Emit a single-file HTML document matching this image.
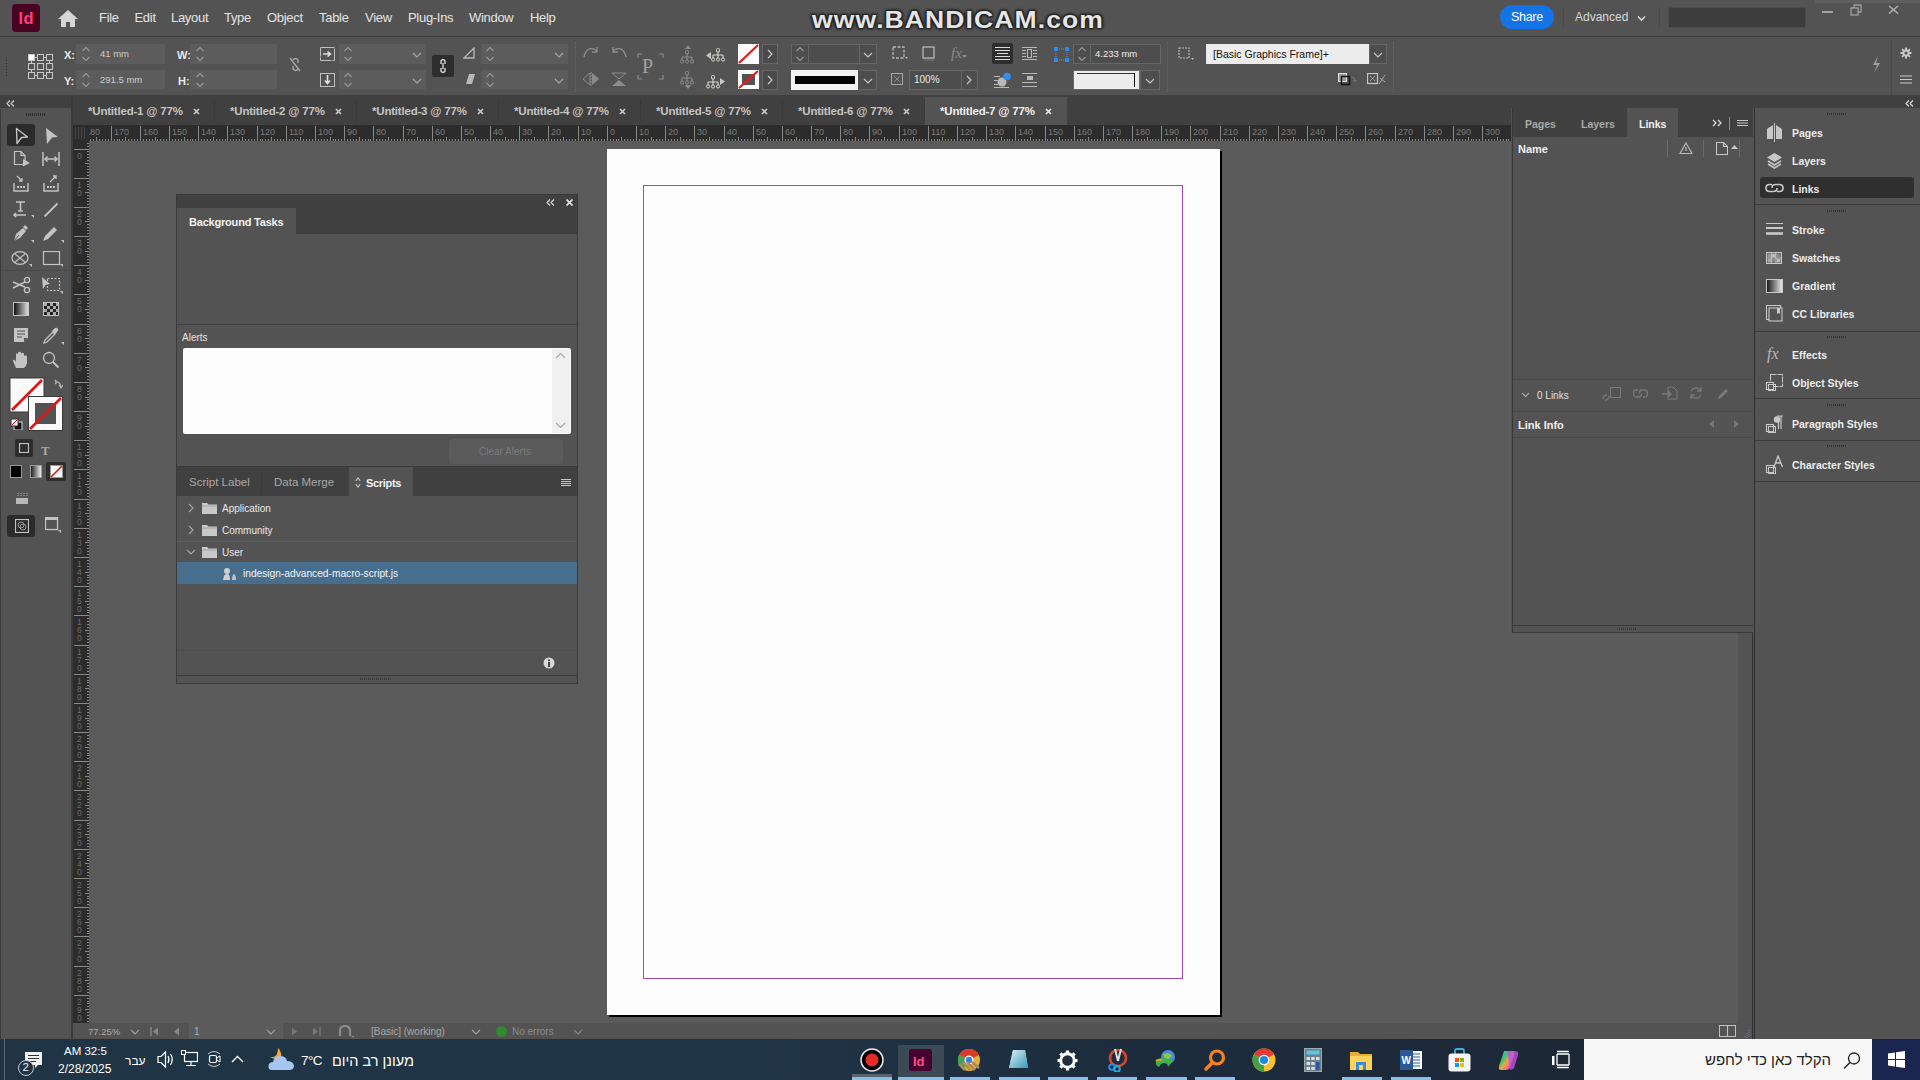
<!DOCTYPE html>
<html><head><meta charset="utf-8"><style>
html,body{margin:0;padding:0;}
body{width:1920px;height:1080px;overflow:hidden;position:relative;background:#535353;font-family:"Liberation Sans", sans-serif;}
body>div,body>svg{position:absolute;}
.t{white-space:nowrap;}
.bc{font-family:"Liberation Sans",sans-serif;font-weight:bold;font-size:24px;line-height:28px;color:#e6e6e6;letter-spacing:1px;transform:scaleX(1.104);transform-origin:0 0;text-shadow:0 0 3px #222,1px 1px 2px #222,-1px -1px 2px #222,1px -1px 2px #222,-1px 1px 2px #222;}
</style></head><body>
<div style="left:0px;top:0px;width:1920px;height:36px;background:#535353"></div><div style="left:0px;top:36px;width:1920px;height:1px;background:#3c3c3c"></div><div style="left:12px;top:4px;width:28px;height:28px;background:#49021f;border-radius:4px"></div><div class="t" style="left:18.5px;top:9.53px;font-size:16.5px;line-height:16.5px;color:#ff3f80;font-weight:bold;letter-spacing:0.3px">Id</div><svg style="left:57px;top:9px;" width="22" height="20" viewBox="0 0 22 20"><path d="M11 1 L21 10 L18 10 L18 18 L13 18 L13 13 L9 13 L9 18 L4 18 L4 10 L1 10 Z" fill="#d6d6d6"/></svg><div class="t" style="left:99px;top:11.00px;font-size:13px;line-height:13px;color:#e4e4e4;font-weight:normal;letter-spacing:-0.3px">File</div><div class="t" style="left:134.5px;top:11.00px;font-size:13px;line-height:13px;color:#e4e4e4;font-weight:normal;letter-spacing:-0.3px">Edit</div><div class="t" style="left:171px;top:11.00px;font-size:13px;line-height:13px;color:#e4e4e4;font-weight:normal;letter-spacing:-0.3px">Layout</div><div class="t" style="left:224px;top:11.00px;font-size:13px;line-height:13px;color:#e4e4e4;font-weight:normal;letter-spacing:-0.3px">Type</div><div class="t" style="left:267px;top:11.00px;font-size:13px;line-height:13px;color:#e4e4e4;font-weight:normal;letter-spacing:-0.3px">Object</div><div class="t" style="left:319px;top:11.00px;font-size:13px;line-height:13px;color:#e4e4e4;font-weight:normal;letter-spacing:-0.3px">Table</div><div class="t" style="left:365px;top:11.00px;font-size:13px;line-height:13px;color:#e4e4e4;font-weight:normal;letter-spacing:-0.3px">View</div><div class="t" style="left:408px;top:11.00px;font-size:13px;line-height:13px;color:#e4e4e4;font-weight:normal;letter-spacing:-0.3px">Plug-Ins</div><div class="t" style="left:469px;top:11.00px;font-size:13px;line-height:13px;color:#e4e4e4;font-weight:normal;letter-spacing:-0.3px">Window</div><div class="t" style="left:530px;top:11.00px;font-size:13px;line-height:13px;color:#e4e4e4;font-weight:normal;letter-spacing:-0.3px">Help</div><div class="t bc" style="left:812px;top:5.5px;">www.BANDICAM.com</div><div style="left:1500px;top:5px;width:54px;height:24px;background:#1473e6;border-radius:12px"></div><div class="t" style="left:1511px;top:10.92px;font-size:12.5px;line-height:12.5px;color:#ffffff;font-weight:normal;letter-spacing:-0.3px">Share</div><div style="left:1563px;top:8px;width:1px;height:20px;background:#4a4a4a"></div><div class="t" style="left:1575px;top:10.84px;font-size:12px;line-height:12px;color:#d8d8d8;font-weight:normal;">Advanced</div><svg style="left:1637px;top:15px;" width="9" height="7" viewBox="0 0 9 7"><path d="M1 1.5 L4.5 5 L8 1.5" stroke="#d8d8d8" stroke-width="1.6" fill="none"/></svg><div style="left:1659px;top:8px;width:1px;height:20px;background:#4a4a4a"></div><div style="left:1668px;top:7px;width:138px;height:21px;background:#3d3d3d;border:1px solid #4c4c4c;box-sizing:border-box"></div><div style="left:1815px;top:0px;width:105px;height:3px;background:#5e5e5e"></div><div style="left:1822px;top:11px;width:11px;height:2px;background:#a0a0a0"></div><svg style="left:1850px;top:4px;" width="12" height="12" viewBox="0 0 12 12"><rect x="1" y="4" width="7" height="7" fill="none" stroke="#a0a0a0" stroke-width="1.3"/><path d="M4 4 V1 H11 V8 H8" fill="none" stroke="#a0a0a0" stroke-width="1.3"/></svg><svg style="left:1888px;top:5px;" width="11" height="9" viewBox="0 0 11 9"><path d="M1 1 L10 8.5 M10 1 L1 8.5" stroke="#b0b0b0" stroke-width="1.5"/></svg><div style="left:0px;top:37px;width:1920px;height:59px;background:#535353"></div><div style="left:0px;top:95px;width:1920px;height:1px;background:#3f3f3f"></div><div style="left:0px;top:96px;width:1920px;height:12px;background:#404040"></div><div style="left:73px;top:96px;width:1438px;height:29px;background:#404040"></div><div style="left:214px;top:100px;width:1px;height:22px;background:#3a3a3a"></div><div class="t" style="left:88px;top:106.27px;font-size:11.5px;line-height:11.5px;color:#c4c4c4;font-weight:bold;letter-spacing:-0.2px">*Untitled-1 @ 77%</div><svg style="left:193px;top:108px;" width="7" height="7" viewBox="0 0 7 7"><path d="M1 1 L6 6 M6 1 L1 6" stroke="#c8c8c8" stroke-width="1.7"/></svg><div style="left:356px;top:100px;width:1px;height:22px;background:#3a3a3a"></div><div class="t" style="left:230px;top:106.27px;font-size:11.5px;line-height:11.5px;color:#c4c4c4;font-weight:bold;letter-spacing:-0.2px">*Untitled-2 @ 77%</div><svg style="left:335px;top:108px;" width="7" height="7" viewBox="0 0 7 7"><path d="M1 1 L6 6 M6 1 L1 6" stroke="#c8c8c8" stroke-width="1.7"/></svg><div style="left:498px;top:100px;width:1px;height:22px;background:#3a3a3a"></div><div class="t" style="left:372px;top:106.27px;font-size:11.5px;line-height:11.5px;color:#c4c4c4;font-weight:bold;letter-spacing:-0.2px">*Untitled-3 @ 77%</div><svg style="left:477px;top:108px;" width="7" height="7" viewBox="0 0 7 7"><path d="M1 1 L6 6 M6 1 L1 6" stroke="#c8c8c8" stroke-width="1.7"/></svg><div style="left:640px;top:100px;width:1px;height:22px;background:#3a3a3a"></div><div class="t" style="left:514px;top:106.27px;font-size:11.5px;line-height:11.5px;color:#c4c4c4;font-weight:bold;letter-spacing:-0.2px">*Untitled-4 @ 77%</div><svg style="left:619px;top:108px;" width="7" height="7" viewBox="0 0 7 7"><path d="M1 1 L6 6 M6 1 L1 6" stroke="#c8c8c8" stroke-width="1.7"/></svg><div style="left:782px;top:100px;width:1px;height:22px;background:#3a3a3a"></div><div class="t" style="left:656px;top:106.27px;font-size:11.5px;line-height:11.5px;color:#c4c4c4;font-weight:bold;letter-spacing:-0.2px">*Untitled-5 @ 77%</div><svg style="left:761px;top:108px;" width="7" height="7" viewBox="0 0 7 7"><path d="M1 1 L6 6 M6 1 L1 6" stroke="#c8c8c8" stroke-width="1.7"/></svg><div style="left:924px;top:100px;width:1px;height:22px;background:#3a3a3a"></div><div class="t" style="left:798px;top:106.27px;font-size:11.5px;line-height:11.5px;color:#c4c4c4;font-weight:bold;letter-spacing:-0.2px">*Untitled-6 @ 77%</div><svg style="left:903px;top:108px;" width="7" height="7" viewBox="0 0 7 7"><path d="M1 1 L6 6 M6 1 L1 6" stroke="#c8c8c8" stroke-width="1.7"/></svg><div style="left:925px;top:97px;width:142px;height:28px;background:#535353"></div><div class="t" style="left:940px;top:106.27px;font-size:11.5px;line-height:11.5px;color:#f0f0f0;font-weight:bold;letter-spacing:-0.2px">*Untitled-7 @ 77%</div><svg style="left:1045px;top:108px;" width="7" height="7" viewBox="0 0 7 7"><path d="M1 1 L6 6 M6 1 L1 6" stroke="#ececec" stroke-width="1.7"/></svg><div style="left:0px;top:109px;width:71px;height:931px;background:#535353"></div><div style="left:71px;top:96px;width:2px;height:944px;background:#3a3a3a"></div><div style="left:73px;top:125px;width:1438px;height:16px;background:#2c2c2c"></div><div style="left:73px;top:141px;width:16px;height:882px;background:#2c2c2c"></div><div style="left:89px;top:141px;width:1422px;height:882px;background:#5b5b5b"></div><div style="left:1511px;top:633px;width:227px;height:390px;background:#5b5b5b"></div><div style="left:1738px;top:633px;width:14px;height:390px;background:#535353"></div><div style="left:1752px;top:108px;width:1px;height:932px;background:#2f2f2f"></div><div style="left:1753px;top:108px;width:1px;height:932px;background:#535353"></div><div style="left:1754px;top:108px;width:1px;height:932px;background:#2f2f2f"></div><div style="left:609px;top:151px;width:613px;height:866px;background:#000"></div><div style="left:607px;top:149px;width:613px;height:866px;background:#fdfdfd"></div><div style="left:643px;top:185px;width:540px;height:794px;border:1px solid #a04ab8;box-sizing:border-box"></div><div style="left:73px;top:1023px;width:1679px;height:16px;background:#535353"></div><div style="left:176px;top:194px;width:402px;height:490px;background:#535353;border:1px solid #3a3a3a;box-sizing:border-box"></div><div style="left:177px;top:195px;width:400px;height:39px;background:#404040"></div><div style="left:177px;top:208px;width:119px;height:26px;background:#535353"></div><div class="t" style="left:189px;top:216.69px;font-size:11px;line-height:11px;color:#f2f2f2;font-weight:bold;letter-spacing:-0.2px">Background Tasks</div><div style="left:1512px;top:108px;width:241px;height:525px;background:#535353;border-left:1px solid #3a3a3a;box-sizing:border-box"></div><div style="left:1513px;top:108px;width:240px;height:29px;background:#404040"></div><div style="left:1627px;top:108px;width:51px;height:29px;background:#535353"></div><div style="left:1755px;top:108px;width:165px;height:932px;background:#535353"></div><div style="left:6px;top:57px;width:1px;height:1px;background:#2f2f2f"></div><div style="left:6px;top:60px;width:1px;height:1px;background:#2f2f2f"></div><div style="left:6px;top:63px;width:1px;height:1px;background:#2f2f2f"></div><div style="left:6px;top:66px;width:1px;height:1px;background:#2f2f2f"></div><div style="left:6px;top:69px;width:1px;height:1px;background:#2f2f2f"></div><div style="left:6px;top:72px;width:1px;height:1px;background:#2f2f2f"></div><div style="left:6px;top:75px;width:1px;height:1px;background:#2f2f2f"></div><svg style="left:27px;top:53px;" width="27" height="27" viewBox="0 0 27 27"><rect x="1.5" y="1.5" width="6" height="6" fill="#ffffff" stroke="#c8c8c8" stroke-width="1"/><rect x="10.5" y="1.5" width="6" height="6" fill="none" stroke="#c8c8c8" stroke-width="1"/><rect x="19.5" y="1.5" width="6" height="6" fill="none" stroke="#c8c8c8" stroke-width="1"/><rect x="1.5" y="10.5" width="6" height="6" fill="none" stroke="#c8c8c8" stroke-width="1"/><rect x="10.5" y="10.5" width="6" height="6" fill="none" stroke="#c8c8c8" stroke-width="1"/><rect x="19.5" y="10.5" width="6" height="6" fill="none" stroke="#c8c8c8" stroke-width="1"/><rect x="1.5" y="19.5" width="6" height="6" fill="none" stroke="#c8c8c8" stroke-width="1"/><rect x="10.5" y="19.5" width="6" height="6" fill="none" stroke="#c8c8c8" stroke-width="1"/><rect x="19.5" y="19.5" width="6" height="6" fill="none" stroke="#c8c8c8" stroke-width="1"/><path d="M8 4.5 H10 M17 4.5 H19 M4.5 8 V10 M22.5 8 V10 M8 22.5 H10 M17 22.5 H19 M4.5 17 V19 M22.5 17 V19" stroke="#c8c8c8" stroke-width="1"/></svg><div class="t" style="left:64px;top:49.69px;font-size:11px;line-height:11px;color:#e8e8e8;font-weight:bold;">X:</div><div class="t" style="left:64px;top:75.69px;font-size:11px;line-height:11px;color:#e8e8e8;font-weight:bold;">Y:</div><div style="left:76px;top:44px;width:89px;height:20px;background:#5c5c5c"></div><div style="left:76px;top:70px;width:89px;height:19px;background:#5c5c5c"></div><svg style="left:81px;top:45px;" width="10" height="18" viewBox="0 0 10 18"><path d="M1.5 6 L5 2.5 L8.5 6 M1.5 12 L5 15.5 L8.5 12" stroke="#9a9a9a" stroke-width="1.1" fill="none"/></svg><svg style="left:81px;top:71px;" width="10" height="18" viewBox="0 0 10 18"><path d="M1.5 6 L5 2.5 L8.5 6 M1.5 12 L5 15.5 L8.5 12" stroke="#9a9a9a" stroke-width="1.1" fill="none"/></svg><div class="t" style="left:100px;top:49.46px;font-size:9.5px;line-height:9.5px;color:#cccccc;font-weight:normal;">41 mm</div><div class="t" style="left:100px;top:75.46px;font-size:9.5px;line-height:9.5px;color:#cccccc;font-weight:normal;">291.5 mm</div><div class="t" style="left:177px;top:49.69px;font-size:11px;line-height:11px;color:#e8e8e8;font-weight:bold;">W:</div><div class="t" style="left:178px;top:75.69px;font-size:11px;line-height:11px;color:#e8e8e8;font-weight:bold;">H:</div><div style="left:190px;top:44px;width:87px;height:20px;background:#5c5c5c"></div><div style="left:190px;top:70px;width:87px;height:19px;background:#5c5c5c"></div><svg style="left:195px;top:45px;" width="10" height="18" viewBox="0 0 10 18"><path d="M1.5 6 L5 2.5 L8.5 6 M1.5 12 L5 15.5 L8.5 12" stroke="#9a9a9a" stroke-width="1.1" fill="none"/></svg><svg style="left:195px;top:71px;" width="10" height="18" viewBox="0 0 10 18"><path d="M1.5 6 L5 2.5 L8.5 6 M1.5 12 L5 15.5 L8.5 12" stroke="#9a9a9a" stroke-width="1.1" fill="none"/></svg><svg style="left:288px;top:57px;" width="14" height="15" viewBox="0 0 14 15"><path d="M5 3 Q7.5 0 10 3 L10 6 M5 9 L5 12 Q7.5 15 10 12 M2 1 L12 14" stroke="#a8a8a8" stroke-width="1.3" fill="none"/></svg><svg style="left:320px;top:47px;" width="15" height="14" viewBox="0 0 15 14"><rect x="0.5" y="0.5" width="14" height="13" fill="none" stroke="#c0c0c0" stroke-dasharray="14 1"/><path d="M3 7 H10 M7.5 4.5 L10.5 7 L7.5 9.5" stroke="#e0e0e0" stroke-width="1.6" fill="none"/></svg><svg style="left:320px;top:73px;" width="15" height="14" viewBox="0 0 15 14"><rect x="0.5" y="0.5" width="14" height="13" fill="none" stroke="#c0c0c0"/><path d="M7.5 2 V10 M5 7.5 L7.5 10.5 L10 7.5" stroke="#e0e0e0" stroke-width="1.6" fill="none"/></svg><div style="left:339px;top:44px;width:87px;height:20px;background:#5c5c5c"></div><div style="left:339px;top:70px;width:87px;height:19px;background:#5c5c5c"></div><svg style="left:343px;top:45px;" width="10" height="18" viewBox="0 0 10 18"><path d="M1.5 6 L5 2.5 L8.5 6 M1.5 12 L5 15.5 L8.5 12" stroke="#9a9a9a" stroke-width="1.1" fill="none"/></svg><svg style="left:343px;top:71px;" width="10" height="18" viewBox="0 0 10 18"><path d="M1.5 6 L5 2.5 L8.5 6 M1.5 12 L5 15.5 L8.5 12" stroke="#9a9a9a" stroke-width="1.1" fill="none"/></svg><svg style="left:412px;top:52px;" width="10" height="6" viewBox="0 0 10 6"><path d="M1 1 L5 5 L9 1" stroke="#a8a8a8" stroke-width="1.1" fill="none"/></svg><svg style="left:412px;top:78px;" width="10" height="6" viewBox="0 0 10 6"><path d="M1 1 L5 5 L9 1" stroke="#a8a8a8" stroke-width="1.1" fill="none"/></svg><div style="left:432px;top:55px;width:22px;height:22px;background:#2d2d2d;border-radius:2px"></div><svg style="left:437px;top:58px;" width="12" height="16" viewBox="0 0 12 16"><path d="M4 6 L4 3 Q6 0 8 3 L8 6 M4 10 L4 13 Q6 16 8 13 L8 10 M6 5 V11" stroke="#d8d8d8" stroke-width="1.4" fill="none"/></svg><svg style="left:463px;top:47px;" width="13" height="12" viewBox="0 0 13 12"><path d="M1 11 L11 1 L11 11 Z" fill="none" stroke="#b8b8b8" stroke-width="1.3"/></svg><svg style="left:463px;top:73px;" width="13" height="12" viewBox="0 0 13 12"><path d="M3 11 L6 1 L12 1 L9 11 Z" fill="#b8b8b8"/></svg><div style="left:481px;top:44px;width:87px;height:20px;background:#5c5c5c"></div><div style="left:481px;top:70px;width:87px;height:19px;background:#5c5c5c"></div><svg style="left:485px;top:45px;" width="10" height="18" viewBox="0 0 10 18"><path d="M1.5 6 L5 2.5 L8.5 6 M1.5 12 L5 15.5 L8.5 12" stroke="#9a9a9a" stroke-width="1.1" fill="none"/></svg><svg style="left:485px;top:71px;" width="10" height="18" viewBox="0 0 10 18"><path d="M1.5 6 L5 2.5 L8.5 6 M1.5 12 L5 15.5 L8.5 12" stroke="#9a9a9a" stroke-width="1.1" fill="none"/></svg><svg style="left:554px;top:52px;" width="10" height="6" viewBox="0 0 10 6"><path d="M1 1 L5 5 L9 1" stroke="#a8a8a8" stroke-width="1.1" fill="none"/></svg><svg style="left:554px;top:78px;" width="10" height="6" viewBox="0 0 10 6"><path d="M1 1 L5 5 L9 1" stroke="#a8a8a8" stroke-width="1.1" fill="none"/></svg><div style="left:575px;top:42px;width:1px;height:50px;border-left:1px dotted #666"></div><svg style="left:582px;top:45px;" width="18" height="16" viewBox="0 0 18 16"><path d="M2 12 Q4 2 12 4 L15 6 M15 2 V7 H10" stroke="#8c8c8c" stroke-width="1.3" fill="none"/></svg><svg style="left:610px;top:45px;" width="18" height="16" viewBox="0 0 18 16"><path d="M16 12 Q14 2 6 4 L3 6 M3 2 V7 H8" stroke="#8c8c8c" stroke-width="1.3" fill="none"/></svg><svg style="left:582px;top:72px;" width="18" height="15" viewBox="0 0 18 15"><path d="M8 1 L1 7 L8 13 Z" fill="none" stroke="#8c8c8c"/><path d="M10 1 L17 7 L10 13 Z" fill="#8c8c8c"/><path d="M9 0 V15" stroke="#8c8c8c" stroke-dasharray="2 1"/></svg><svg style="left:610px;top:72px;" width="18" height="15" viewBox="0 0 18 15"><path d="M2 1 L9 7 L16 1 Z" fill="none" stroke="#8c8c8c"/><path d="M2 14 L9 8 L16 14 Z" fill="#8c8c8c"/></svg><svg style="left:637px;top:53px;" width="27" height="27" viewBox="0 0 27 27"><path d="M1 5 V1 H5 M22 1 H26 V5 M1 22 V26 H5 M22 26 H26 V22" stroke="#8c8c8c" stroke-width="1.2" fill="none"/></svg><div class="t" style="left:642px;top:56.07px;font-size:20px;line-height:20px;color:#a0a0a0;font-weight:normal;font-family:Liberation Serif,serif">P</div><svg style="left:680px;top:50px;" width="15" height="14" viewBox="0 0 15 14"><path d="M7 3.5 V7 M2 7 H12 M2 7 V10 M7 7 V10 M12 7 V10" stroke="#8c8c8c" stroke-width="1.1" fill="none"/><rect x="5.5" y="0.5" width="3" height="3.5" rx="1" fill="none" stroke="#8c8c8c"/><circle cx="2" cy="11.5" r="1.6" fill="none" stroke="#8c8c8c"/><circle cx="7" cy="11.5" r="1.6" fill="none" stroke="#8c8c8c"/><circle cx="12" cy="11.5" r="1.6" fill="none" stroke="#8c8c8c"/></svg><svg style="left:711px;top:48px;" width="15" height="14" viewBox="0 0 15 14"><path d="M7 3.5 V7 M2 7 H12 M2 7 V10 M7 7 V10 M12 7 V10" stroke="#d8d8d0" stroke-width="1.1" fill="none"/><rect x="5.5" y="0.5" width="3" height="3.5" rx="1" fill="none" stroke="#d8d8d0"/><circle cx="2" cy="11.5" r="1.6" fill="none" stroke="#d8d8d0"/><circle cx="7" cy="11.5" r="1.6" fill="none" stroke="#d8d8d0"/><circle cx="12" cy="11.5" r="1.6" fill="none" stroke="#d8d8d0"/></svg><svg style="left:680px;top:71px;" width="15" height="14" viewBox="0 0 15 14"><path d="M7 3.5 V7 M2 7 H12 M2 7 V10 M7 7 V10 M12 7 V10" stroke="#8c8c8c" stroke-width="1.1" fill="none"/><rect x="5.5" y="0.5" width="3" height="3.5" rx="1" fill="none" stroke="#8c8c8c"/><circle cx="2" cy="11.5" r="1.6" fill="none" stroke="#8c8c8c"/><circle cx="7" cy="11.5" r="1.6" fill="none" stroke="#8c8c8c"/><circle cx="12" cy="11.5" r="1.6" fill="none" stroke="#8c8c8c"/></svg><svg style="left:706px;top:75px;" width="15" height="14" viewBox="0 0 15 14"><path d="M7 3.5 V7 M2 7 H12 M2 7 V10 M7 7 V10 M12 7 V10" stroke="#d8d8d0" stroke-width="1.1" fill="none"/><rect x="5.5" y="0.5" width="3" height="3.5" rx="1" fill="none" stroke="#d8d8d0"/><circle cx="2" cy="11.5" r="1.6" fill="none" stroke="#d8d8d0"/><circle cx="7" cy="11.5" r="1.6" fill="none" stroke="#d8d8d0"/><circle cx="12" cy="11.5" r="1.6" fill="none" stroke="#d8d8d0"/></svg><svg style="left:685px;top:45px;" width="6" height="4" viewBox="0 0 6 4"><path d="M0 4 L3 0 L6 4 Z" fill="#8c8c8c"/></svg><svg style="left:685px;top:85px;" width="6" height="4" viewBox="0 0 6 4"><path d="M0 0 L3 4 L6 0 Z" fill="#8c8c8c"/></svg><svg style="left:706px;top:52px;" width="5" height="7" viewBox="0 0 5 7"><path d="M5 0 L0 3.5 L5 7 Z" fill="#c8c8c0"/></svg><svg style="left:720px;top:78px;" width="5" height="7" viewBox="0 0 5 7"><path d="M0 0 L5 3.5 L0 7 Z" fill="#c8c8c0"/></svg><svg style="left:738px;top:44px;" width="21" height="20" viewBox="0 0 21 20"><rect x="0" y="0" width="21" height="20" fill="#fafafa"/><path d="M1 19 L20 1" stroke="#e31b1b" stroke-width="2.2"/></svg><svg style="left:738px;top:70px;" width="21" height="19" viewBox="0 0 21 19"><rect x="0" y="0" width="21" height="19" fill="#fafafa"/><rect x="4" y="4" width="13" height="11" fill="#535353"/><path d="M1 18 L20 1" stroke="#e31b1b" stroke-width="2.2"/></svg><div style="left:762px;top:44px;width:16px;height:20px;background:#4a4a4a;border:1px solid #666;box-sizing:border-box"></div><svg style="left:766px;top:49px;" width="8" height="10" viewBox="0 0 8 10"><path d="M2 1 L6 5 L2 9" stroke="#c8c8c8" stroke-width="1.2" fill="none"/></svg><div style="left:762px;top:70px;width:16px;height:20px;background:#4a4a4a;border:1px solid #666;box-sizing:border-box"></div><svg style="left:766px;top:75px;" width="8" height="10" viewBox="0 0 8 10"><path d="M2 1 L6 5 L2 9" stroke="#c8c8c8" stroke-width="1.2" fill="none"/></svg><div style="left:791px;top:44px;width:86px;height:20px;background:#4d4d4d;border:1px solid #666;box-sizing:border-box"></div><div style="left:808px;top:44px;width:1px;height:20px;background:#666"></div><div style="left:859px;top:44px;width:1px;height:20px;background:#666"></div><svg style="left:795px;top:45px;" width="10" height="18" viewBox="0 0 10 18"><path d="M1.5 6 L5 2.5 L8.5 6 M1.5 12 L5 15.5 L8.5 12" stroke="#9a9a9a" stroke-width="1.1" fill="none"/></svg><svg style="left:863px;top:52px;" width="10" height="6" viewBox="0 0 10 6"><path d="M1 1 L5 5 L9 1" stroke="#c8c8c8" stroke-width="1.1" fill="none"/></svg><div style="left:791px;top:70px;width:86px;height:20px;background:#4d4d4d;border:1px solid #666;box-sizing:border-box"></div><div style="left:791px;top:70px;width:67px;height:20px;background:#f2f2f2"></div><div style="left:795px;top:76px;width:60px;height:8px;background:#000"></div><svg style="left:863px;top:78px;" width="10" height="6" viewBox="0 0 10 6"><path d="M1 1 L5 5 L9 1" stroke="#c8c8c8" stroke-width="1.1" fill="none"/></svg><svg style="left:892px;top:46px;" width="16" height="14" viewBox="0 0 16 14"><rect x="1" y="1" width="11" height="11" fill="none" stroke="#b8b8b8" stroke-dasharray="3 1.5" stroke-width="1.3"/><path d="M13 11 L16 11 L14.5 13 Z" fill="#b8b8b8"/></svg><svg style="left:922px;top:46px;" width="14" height="15" viewBox="0 0 14 15"><rect x="1" y="1" width="11" height="11" fill="none" stroke="#b8b8b8" stroke-width="1.3"/><path d="M2 14 H12" stroke="#777" stroke-width="1"/></svg><div class="t" style="left:951px;top:46.30px;font-size:15px;line-height:15px;color:#8c8c8c;font-weight:normal;font-family:Liberation Serif,serif"><i>fx</i></div><svg style="left:962px;top:55px;" width="5" height="4" viewBox="0 0 5 4"><path d="M0 0 L5 0 L2.5 3 Z" fill="#8c8c8c"/></svg><svg style="left:891px;top:73px;" width="12" height="12" viewBox="0 0 12 12"><rect x="0.5" y="0.5" width="11" height="11" fill="none" stroke="#a8a8a8"/><path d="M3 3 L9 9 M9 3 L3 9" stroke="#888" stroke-width="1"/></svg><div style="left:909px;top:70px;width:69px;height:20px;background:#4d4d4d;border:1px solid #666;box-sizing:border-box"></div><div style="left:961px;top:70px;width:1px;height:20px;background:#666"></div><div class="t" style="left:914px;top:75.03px;font-size:10px;line-height:10px;color:#e8e8e8;font-weight:normal;">100%</div><svg style="left:965px;top:75px;" width="8" height="10" viewBox="0 0 8 10"><path d="M2 1 L6 5 L2 9" stroke="#c8c8c8" stroke-width="1.2" fill="none"/></svg><div style="left:992px;top:43px;width:21px;height:21px;background:#2e2e2e;border-radius:2px"></div><svg style="left:995px;top:46px;" width="15" height="15" viewBox="0 0 15 15"><path d="M0 1.5 H15 M0 13.5 H15 M0 4.5 H15 M0 10.5 H15 M2 7.5 H13" stroke="#dcdcdc" stroke-width="1.2"/></svg><svg style="left:1022px;top:46px;" width="15" height="15" viewBox="0 0 15 15"><path d="M0 1.5 H15 M0 13.5 H15 M0 4.5 H4 M11 4.5 H15 M0 7.5 H4 M11 7.5 H15 M0 10.5 H4 M11 10.5 H15" stroke="#b8b8b8" stroke-width="1.2"/><rect x="5.5" y="3.5" width="4" height="8" fill="none" stroke="#b8b8b8"/></svg><svg style="left:994px;top:72px;" width="18" height="17" viewBox="0 0 18 17"><path d="M0 4.5 H6 M0 8.5 H4 M0 12.5 H4 M0 15.5 H15" stroke="#b8b8b8" stroke-width="1.2"/><circle cx="8" cy="10" r="4.5" fill="#b8b8b8"/><circle cx="13" cy="4.5" r="3.8" fill="#2c8ff5"/></svg><svg style="left:1022px;top:72px;" width="15" height="16" viewBox="0 0 15 16"><path d="M0 1.5 H15 M0 14.5 H15 M0 10.5 H15" stroke="#b8b8b8" stroke-width="1.2"/><rect x="5" y="4" width="6" height="4" fill="#b8b8b8"/></svg><svg style="left:1054px;top:47px;" width="15" height="15" viewBox="0 0 15 15"><rect x="0" y="0" width="4" height="4" fill="#2a8cf0"/><rect x="11" y="0" width="4" height="4" fill="#2a8cf0"/><rect x="0" y="11" width="4" height="4" fill="#2a8cf0"/><rect x="11" y="11" width="4" height="4" fill="#2a8cf0"/><path d="M5 2 H10 M5 13 H10 M2 5 V10 M13 5 V10" stroke="#888" stroke-width="1" stroke-dasharray="1 1"/></svg><div style="left:1073px;top:44px;width:88px;height:20px;background:#4d4d4d;border:1px solid #666;box-sizing:border-box"></div><div style="left:1090px;top:44px;width:1px;height:20px;background:#666"></div><svg style="left:1077px;top:45px;" width="10" height="18" viewBox="0 0 10 18"><path d="M1.5 6 L5 2.5 L8.5 6 M1.5 12 L5 15.5 L8.5 12" stroke="#9a9a9a" stroke-width="1.1" fill="none"/></svg><div class="t" style="left:1095px;top:49.46px;font-size:9.5px;line-height:9.5px;color:#f0f0f0;font-weight:normal;">4.233 mm</div><div style="left:1073px;top:70px;width:67px;height:20px;background:#ececec;border:1px solid #666;box-sizing:border-box"></div><div style="left:1077px;top:73px;width:58px;height:1px;background:#333"></div><div style="left:1134px;top:73px;width:1px;height:14px;background:#111"></div><div style="left:1140px;top:70px;width:20px;height:20px;background:#4d4d4d;border:1px solid #666;box-sizing:border-box"></div><svg style="left:1145px;top:78px;" width="10" height="6" viewBox="0 0 10 6"><path d="M1 1 L5 5 L9 1" stroke="#c8c8c8" stroke-width="1.1" fill="none"/></svg><div style="left:1167px;top:42px;width:1px;height:50px;border-left:1px dotted #666"></div><svg style="left:1178px;top:47px;" width="16" height="14" viewBox="0 0 16 14"><rect x="1" y="1" width="10" height="10" fill="none" stroke="#b8b8b8" stroke-width="1.2" stroke-dasharray="2 1"/><path d="M13 11 L16 11 L14.5 13 Z" fill="#b8b8b8"/></svg><div style="left:1206px;top:44px;width:163px;height:20px;background:#ececec"></div><div class="t" style="left:1213px;top:49.11px;font-size:10.5px;line-height:10.5px;color:#111;font-weight:normal;">[Basic Graphics Frame]+</div><div style="left:1369px;top:44px;width:18px;height:20px;background:#4d4d4d;border:1px solid #666;box-sizing:border-box"></div><svg style="left:1373px;top:52px;" width="10" height="6" viewBox="0 0 10 6"><path d="M1 1 L5 5 L9 1" stroke="#c8c8c8" stroke-width="1.1" fill="none"/></svg><svg style="left:1338px;top:73px;" width="20" height="14" viewBox="0 0 20 14"><rect x="0.5" y="0.5" width="8" height="8" fill="#999" stroke="#ddd"/><rect x="3.5" y="3.5" width="8" height="8" fill="none" stroke="#111" stroke-width="1.4"/><path d="M13 4 Q17 4 17 9 M15 7 L17 9 L19 7" stroke="#777" fill="none"/></svg><svg style="left:1367px;top:73px;" width="19" height="14" viewBox="0 0 19 14"><rect x="0.5" y="0.5" width="10" height="10" fill="none" stroke="#c8c8c8" stroke-width="1.2"/><path d="M3 3 L8 8 M8 3 L3 8" stroke="#999"/><path d="M12 11 L18 2 M13 5 L18 9" stroke="#aaa"/></svg><div style="left:1393px;top:42px;width:1px;height:50px;border-left:1px dotted #666"></div><svg style="left:1871px;top:56px;" width="10" height="17" viewBox="0 0 10 17"><path d="M7 0 L2 9 L6 9 L3 17 L9 7 L5 7 Z" fill="#a0a0a0"/></svg><div style="left:1891px;top:40px;width:1px;height:55px;background:#4a4a4a"></div><svg style="left:1900px;top:47px;" width="12" height="12" viewBox="0 0 12 12"><circle cx="6" cy="6" r="3.6" fill="#c8c8c8"/><path d="M6 0.5 V11.5 M0.5 6 H11.5 M2.1 2.1 L9.9 9.9 M9.9 2.1 L2.1 9.9" stroke="#c8c8c8" stroke-width="2"/><circle cx="6" cy="6" r="1.6" fill="#535353"/></svg><svg style="left:1900px;top:75px;" width="12" height="9" viewBox="0 0 12 9"><path d="M0 1 H12 M0 4.5 H12 M0 8 H12" stroke="#c8c8c8" stroke-width="1.2"/></svg><div style="left:26px;top:113px;width:19px;height:3px;background:repeating-linear-gradient(90deg,#2e2e2e 0 1px,transparent 1px 2px)"></div><div style="left:7px;top:124px;width:28px;height:22px;background:#2b2b2b;border-radius:3px"></div><svg style="left:15px;top:127px;" width="14" height="18" viewBox="0 0 14 18"><path d="M1.5 1.5 L12.5 10 L6.5 10.5 L2 16.5 Z" fill="none" stroke="#c4c4c4" stroke-width="1.4" stroke-linejoin="round"/></svg><svg style="left:45px;top:127px;" width="14" height="18" viewBox="0 0 14 18"><path d="M1 1 L13 10 L7 10.5 L2 17 Z" fill="#c4c4c4"/></svg><svg style="left:13px;top:150px;" width="18" height="17" viewBox="0 0 18 17"><path d="M1.5 1.5 H8 L12 5.5 V14.5 H1.5 Z M8 1.5 V5.5 H12" fill="none" stroke="#c4c4c4" stroke-width="1.2"/><path d="M10 9 L17 13 L10 16.5 Z" fill="#c4c4c4"/></svg><svg style="left:41px;top:151px;" width="20" height="16" viewBox="0 0 20 16"><path d="M2 1 V15 M18 1 V15 M4 8 H16 M6.5 5.5 L4 8 L6.5 10.5 M13.5 5.5 L16 8 L13.5 10.5" stroke="#c4c4c4" stroke-width="1.5" fill="none"/></svg><svg style="left:13px;top:175px;" width="16" height="17" viewBox="0 0 16 17"><path d="M1 8 V16 H15 V8" stroke="#c4c4c4" stroke-width="1.4" fill="none"/><path d="M4 1 L9 6 M9 3 V6 H6" stroke="#c4c4c4" stroke-width="1.3" fill="none"/><rect x="4" y="11" width="2" height="2" fill="#c4c4c4"/><rect x="7" y="11" width="2" height="2" fill="#c4c4c4"/><rect x="10" y="11" width="2" height="2" fill="#c4c4c4"/></svg><svg style="left:43px;top:175px;" width="16" height="17" viewBox="0 0 16 17"><path d="M1 8 V16 H15 V8" stroke="#c4c4c4" stroke-width="1.4" fill="none"/><path d="M7 7 L13 1 M10 1 H13 V4" stroke="#c4c4c4" stroke-width="1.3" fill="none"/><rect x="4" y="11" width="2" height="2" fill="#c4c4c4"/><rect x="7" y="11" width="2" height="2" fill="#c4c4c4"/><rect x="10" y="11" width="2" height="2" fill="#c4c4c4"/></svg><svg style="left:12px;top:200px;" width="22" height="19" viewBox="0 0 22 19"><path d="M4 2 H13 M8.5 2 V11 M6 11 H11 M2 15 H14 M4 13 L2 15 L4 17" stroke="#c4c4c4" stroke-width="1.6" fill="none"/><path d="M19 15 L22 15 L22 18 Z" fill="#c4c4c4"/></svg><svg style="left:43px;top:202px;" width="16" height="16" viewBox="0 0 16 16"><path d="M1.5 14.5 L14.5 1.5" stroke="#c4c4c4" stroke-width="1.8"/></svg><svg style="left:12px;top:225px;" width="22" height="19" viewBox="0 0 22 19"><path d="M2 16 L4 9 L11 3 L14 6 L8 13 Z" fill="#c4c4c4"/><path d="M11 2 L13 0 L16 3 L14 5 Z" fill="#c4c4c4"/><path d="M2 16 L7 10" stroke="#535353" stroke-width="1"/><path d="M19 15 L22 15 L22 18 Z" fill="#c4c4c4"/></svg><svg style="left:42px;top:225px;" width="22" height="19" viewBox="0 0 22 19"><path d="M1 16 L3 11 L12 2 L15 5 L6 14 Z" fill="#c4c4c4"/><path d="M19 15 L22 15 L22 18 Z" fill="#c4c4c4"/></svg><svg style="left:11px;top:251px;" width="22" height="18" viewBox="0 0 22 18"><ellipse cx="9" cy="7" rx="8" ry="6.3" fill="none" stroke="#c4c4c4" stroke-width="1.2"/><path d="M3.5 2.5 L14.5 11.5 M14.5 2.5 L3.5 11.5" stroke="#c4c4c4" stroke-width="1.1"/><path d="M18 13 L21 13 L21 16 Z" fill="#c4c4c4"/></svg><svg style="left:42px;top:251px;" width="22" height="18" viewBox="0 0 22 18"><rect x="1.5" y="0.5" width="16" height="13" fill="none" stroke="#c4c4c4" stroke-width="1.2"/><path d="M18 13 L21 13 L21 16 Z" fill="#c4c4c4"/></svg><div style="left:4px;top:270px;width:64px;height:1px;background:#4a4a4a"></div><svg style="left:12px;top:276px;" width="20" height="18" viewBox="0 0 20 18"><path d="M1 6 L13 11 M1 12 L13 6" stroke="#c4c4c4" stroke-width="1.5"/><circle cx="15" cy="4" r="2.6" fill="none" stroke="#c4c4c4" stroke-width="1.3"/><circle cx="15" cy="14" r="2.6" fill="none" stroke="#c4c4c4" stroke-width="1.3"/></svg><svg style="left:41px;top:276px;" width="22" height="18" viewBox="0 0 22 18"><path d="M1 1 L9 8 L5 8.5 L2 13 Z" fill="#c4c4c4"/><rect x="6.5" y="2.5" width="12" height="12" fill="none" stroke="#c4c4c4" stroke-width="1.1" stroke-dasharray="2 1.5"/><path d="M19 15 L22 15 L22 18 Z" fill="#c4c4c4"/></svg><div style="left:13px;top:302px;width:16px;height:14px;border:1px solid #c4c4c4;box-sizing:border-box;background:linear-gradient(90deg,#111,#ddd)"></div><div style="left:43px;top:302px;width:16px;height:14px;border:1px solid #c4c4c4;box-sizing:border-box;background:repeating-conic-gradient(#222 0 25%,#aaa 0 50%) 0 0/6px 6px"></div><svg style="left:13px;top:327px;" width="17" height="17" viewBox="0 0 17 17"><path d="M1 1 H15 V11 L11 15 H1 Z" fill="#c4c4c4"/><path d="M4 4 H12 M4 7 H12 M4 10 H9" stroke="#535353" stroke-width="1.2"/><path d="M11 15 V11 H15" fill="#535353"/></svg><svg style="left:42px;top:327px;" width="22" height="18" viewBox="0 0 22 18"><path d="M2 16 L3 13 L11 5 L13 7 L5 15 Z" fill="none" stroke="#c4c4c4" stroke-width="1.3"/><path d="M10 4 L13 1 Q15 0 16 2 Q17 3 15 5 L13 7 Z" fill="#c4c4c4"/><path d="M19 15 L22 15 L22 18 Z" fill="#c4c4c4"/></svg><svg style="left:12px;top:351px;" width="18" height="18" viewBox="0 0 18 18"><path d="M4 17 L1 10 Q1 8 3 9 L4 11 V3 Q5 1.5 6 3 V9 V1.5 Q7.5 0 9 1.5 V9 V2.5 Q10.5 1 12 2.5 V9 V5 Q13.5 3.5 15 5 V12 Q14 16 12 17 Z" fill="#c4c4c4"/></svg><svg style="left:42px;top:351px;" width="18" height="18" viewBox="0 0 18 18"><circle cx="7" cy="7" r="5.5" fill="none" stroke="#c4c4c4" stroke-width="1.3"/><path d="M11 11 L16.5 16.5" stroke="#c4c4c4" stroke-width="1.8"/></svg><svg style="left:9px;top:377px;" width="55" height="55" viewBox="0 0 55 55"><rect x="1" y="1" width="34" height="34" fill="#fafafa" stroke="#3a3a3a" stroke-width="1"/><path d="M3 33 L33 3" stroke="#e01616" stroke-width="2.6"/><rect x="19.5" y="19.5" width="34" height="34" fill="#fafafa" stroke="#3a3a3a" stroke-width="1"/><rect x="26" y="26" width="21" height="21" fill="#535353"/><path d="M21 52 L52 21" stroke="#e01616" stroke-width="2.6"/></svg><svg style="left:54px;top:378px;" width="9" height="11" viewBox="0 0 9 11"><path d="M1 4 Q6 3 7 9 M5 7 L7 10 L9 7 M1 2 L3 4 L1 6" stroke="#b0b0b0" stroke-width="1.2" fill="none"/></svg><svg style="left:10px;top:418px;" width="13" height="12" viewBox="0 0 13 12"><rect x="4" y="4" width="8" height="8" fill="#111" stroke="#ddd"/><rect x="1" y="1" width="7" height="7" fill="#fafafa" stroke="#333"/><path d="M2 7 L7 2" stroke="#e01616"/></svg><div style="left:15px;top:439px;width:18px;height:18px;background:#2e2e2e;border-radius:2px"></div><svg style="left:19px;top:443px;" width="10" height="10" viewBox="0 0 10 10"><rect x="0.5" y="0.5" width="9" height="9" fill="none" stroke="#c4c4c4" stroke-width="1.2"/></svg><div class="t" style="left:41px;top:444.00px;font-size:13px;line-height:13px;color:#a8a8a8;font-weight:bold;font-family:Liberation Serif,serif">T</div><div style="left:10px;top:465px;width:12px;height:13px;background:#000;border:1px solid #999;box-sizing:border-box"></div><div style="left:30px;top:465px;width:12px;height:13px;background:linear-gradient(90deg,#222,#eee);border:1px solid #999;box-sizing:border-box"></div><div style="left:46px;top:462px;width:20px;height:19px;background:#2e2e2e;border-radius:2px"></div><svg style="left:50px;top:465px;" width="13" height="13" viewBox="0 0 13 13"><rect x="0.5" y="0.5" width="12" height="12" fill="#fafafa" stroke="#999"/><path d="M1 12 L12 1" stroke="#e01616" stroke-width="1.6"/></svg><svg style="left:15px;top:492px;" width="14" height="13" viewBox="0 0 14 13"><path d="M1 6 H13 V12 H1 Z" fill="#b8b8b8"/><path d="M3 1 V4 M6 1 V4 M9 1 V4 M12 1 V4" stroke="#b8b8b8" stroke-dasharray="1 1"/></svg><div style="left:7px;top:515px;width:28px;height:22px;background:#2b2b2b;border-radius:3px"></div><svg style="left:15px;top:519px;" width="14" height="14" viewBox="0 0 14 14"><rect x="0.5" y="0.5" width="13" height="13" fill="none" stroke="#c4c4c4" stroke-width="1.2"/><circle cx="6" cy="6" r="3" fill="none" stroke="#999"/><circle cx="8" cy="8" r="3" fill="none" stroke="#999"/></svg><svg style="left:45px;top:517px;" width="16" height="16" viewBox="0 0 16 16"><rect x="0.5" y="0.5" width="12" height="12" fill="none" stroke="#c4c4c4" stroke-width="1.3"/><path d="M1 2 H12" stroke="#c4c4c4" stroke-width="2"/><path d="M13 13 L16 13 L16 16 Z" fill="#c4c4c4"/></svg><svg style="left:73px;top:125px;" width="1438" height="16" viewBox="0 0 1438 16"><path d="M0.5 14 V16" stroke="#8a8a86" stroke-width="1"/><path d="M3.5 14 V16" stroke="#8a8a86" stroke-width="1"/><path d="M6.5 14 V16" stroke="#8a8a86" stroke-width="1"/><path d="M9.5 1 V16" stroke="#8a8a86" stroke-width="1"/><text x="12.0" y="10" font-size="9" fill="#7c7c78" font-family="Liberation Sans">180</text><path d="M11.5 14 V16" stroke="#8a8a86" stroke-width="1"/><path d="M14.5 14 V16" stroke="#8a8a86" stroke-width="1"/><path d="M17.5 14 V16" stroke="#8a8a86" stroke-width="1"/><path d="M20.5 14 V16" stroke="#8a8a86" stroke-width="1"/><path d="M23.5 12 V16" stroke="#8a8a86" stroke-width="1"/><path d="M26.5 14 V16" stroke="#8a8a86" stroke-width="1"/><path d="M29.5 14 V16" stroke="#8a8a86" stroke-width="1"/><path d="M32.5 14 V16" stroke="#8a8a86" stroke-width="1"/><path d="M35.5 14 V16" stroke="#8a8a86" stroke-width="1"/><path d="M38.5 1 V16" stroke="#8a8a86" stroke-width="1"/><text x="41.0" y="10" font-size="9" fill="#7c7c78" font-family="Liberation Sans">170</text><path d="M41.5 14 V16" stroke="#8a8a86" stroke-width="1"/><path d="M44.5 14 V16" stroke="#8a8a86" stroke-width="1"/><path d="M46.5 14 V16" stroke="#8a8a86" stroke-width="1"/><path d="M49.5 14 V16" stroke="#8a8a86" stroke-width="1"/><path d="M52.5 12 V16" stroke="#8a8a86" stroke-width="1"/><path d="M55.5 14 V16" stroke="#8a8a86" stroke-width="1"/><path d="M58.5 14 V16" stroke="#8a8a86" stroke-width="1"/><path d="M61.5 14 V16" stroke="#8a8a86" stroke-width="1"/><path d="M64.5 14 V16" stroke="#8a8a86" stroke-width="1"/><path d="M67.5 1 V16" stroke="#8a8a86" stroke-width="1"/><text x="70.0" y="10" font-size="9" fill="#7c7c78" font-family="Liberation Sans">160</text><path d="M70.5 14 V16" stroke="#8a8a86" stroke-width="1"/><path d="M73.5 14 V16" stroke="#8a8a86" stroke-width="1"/><path d="M76.5 14 V16" stroke="#8a8a86" stroke-width="1"/><path d="M79.5 14 V16" stroke="#8a8a86" stroke-width="1"/><path d="M82.5 12 V16" stroke="#8a8a86" stroke-width="1"/><path d="M84.5 14 V16" stroke="#8a8a86" stroke-width="1"/><path d="M87.5 14 V16" stroke="#8a8a86" stroke-width="1"/><path d="M90.5 14 V16" stroke="#8a8a86" stroke-width="1"/><path d="M93.5 14 V16" stroke="#8a8a86" stroke-width="1"/><path d="M96.5 1 V16" stroke="#8a8a86" stroke-width="1"/><text x="99.0" y="10" font-size="9" fill="#7c7c78" font-family="Liberation Sans">150</text><path d="M99.5 14 V16" stroke="#8a8a86" stroke-width="1"/><path d="M102.5 14 V16" stroke="#8a8a86" stroke-width="1"/><path d="M105.5 14 V16" stroke="#8a8a86" stroke-width="1"/><path d="M108.5 14 V16" stroke="#8a8a86" stroke-width="1"/><path d="M111.5 12 V16" stroke="#8a8a86" stroke-width="1"/><path d="M114.5 14 V16" stroke="#8a8a86" stroke-width="1"/><path d="M117.5 14 V16" stroke="#8a8a86" stroke-width="1"/><path d="M119.5 14 V16" stroke="#8a8a86" stroke-width="1"/><path d="M122.5 14 V16" stroke="#8a8a86" stroke-width="1"/><path d="M125.5 1 V16" stroke="#8a8a86" stroke-width="1"/><text x="128.0" y="10" font-size="9" fill="#7c7c78" font-family="Liberation Sans">140</text><path d="M128.5 14 V16" stroke="#8a8a86" stroke-width="1"/><path d="M131.5 14 V16" stroke="#8a8a86" stroke-width="1"/><path d="M134.5 14 V16" stroke="#8a8a86" stroke-width="1"/><path d="M137.5 14 V16" stroke="#8a8a86" stroke-width="1"/><path d="M140.5 12 V16" stroke="#8a8a86" stroke-width="1"/><path d="M143.5 14 V16" stroke="#8a8a86" stroke-width="1"/><path d="M146.5 14 V16" stroke="#8a8a86" stroke-width="1"/><path d="M149.5 14 V16" stroke="#8a8a86" stroke-width="1"/><path d="M152.5 14 V16" stroke="#8a8a86" stroke-width="1"/><path d="M154.5 1 V16" stroke="#8a8a86" stroke-width="1"/><text x="157.0" y="10" font-size="9" fill="#7c7c78" font-family="Liberation Sans">130</text><path d="M157.5 14 V16" stroke="#8a8a86" stroke-width="1"/><path d="M160.5 14 V16" stroke="#8a8a86" stroke-width="1"/><path d="M163.5 14 V16" stroke="#8a8a86" stroke-width="1"/><path d="M166.5 14 V16" stroke="#8a8a86" stroke-width="1"/><path d="M169.5 12 V16" stroke="#8a8a86" stroke-width="1"/><path d="M172.5 14 V16" stroke="#8a8a86" stroke-width="1"/><path d="M175.5 14 V16" stroke="#8a8a86" stroke-width="1"/><path d="M178.5 14 V16" stroke="#8a8a86" stroke-width="1"/><path d="M181.5 14 V16" stroke="#8a8a86" stroke-width="1"/><path d="M184.5 1 V16" stroke="#8a8a86" stroke-width="1"/><text x="187.0" y="10" font-size="9" fill="#7c7c78" font-family="Liberation Sans">120</text><path d="M187.5 14 V16" stroke="#8a8a86" stroke-width="1"/><path d="M189.5 14 V16" stroke="#8a8a86" stroke-width="1"/><path d="M192.5 14 V16" stroke="#8a8a86" stroke-width="1"/><path d="M195.5 14 V16" stroke="#8a8a86" stroke-width="1"/><path d="M198.5 12 V16" stroke="#8a8a86" stroke-width="1"/><path d="M201.5 14 V16" stroke="#8a8a86" stroke-width="1"/><path d="M204.5 14 V16" stroke="#8a8a86" stroke-width="1"/><path d="M207.5 14 V16" stroke="#8a8a86" stroke-width="1"/><path d="M210.5 14 V16" stroke="#8a8a86" stroke-width="1"/><path d="M213.5 1 V16" stroke="#8a8a86" stroke-width="1"/><text x="216.0" y="10" font-size="9" fill="#7c7c78" font-family="Liberation Sans">110</text><path d="M216.5 14 V16" stroke="#8a8a86" stroke-width="1"/><path d="M219.5 14 V16" stroke="#8a8a86" stroke-width="1"/><path d="M222.5 14 V16" stroke="#8a8a86" stroke-width="1"/><path d="M224.5 14 V16" stroke="#8a8a86" stroke-width="1"/><path d="M227.5 12 V16" stroke="#8a8a86" stroke-width="1"/><path d="M230.5 14 V16" stroke="#8a8a86" stroke-width="1"/><path d="M233.5 14 V16" stroke="#8a8a86" stroke-width="1"/><path d="M236.5 14 V16" stroke="#8a8a86" stroke-width="1"/><path d="M239.5 14 V16" stroke="#8a8a86" stroke-width="1"/><path d="M242.5 1 V16" stroke="#8a8a86" stroke-width="1"/><text x="245.0" y="10" font-size="9" fill="#7c7c78" font-family="Liberation Sans">100</text><path d="M245.5 14 V16" stroke="#8a8a86" stroke-width="1"/><path d="M248.5 14 V16" stroke="#8a8a86" stroke-width="1"/><path d="M251.5 14 V16" stroke="#8a8a86" stroke-width="1"/><path d="M254.5 14 V16" stroke="#8a8a86" stroke-width="1"/><path d="M257.5 12 V16" stroke="#8a8a86" stroke-width="1"/><path d="M260.5 14 V16" stroke="#8a8a86" stroke-width="1"/><path d="M262.5 14 V16" stroke="#8a8a86" stroke-width="1"/><path d="M265.5 14 V16" stroke="#8a8a86" stroke-width="1"/><path d="M268.5 14 V16" stroke="#8a8a86" stroke-width="1"/><path d="M271.5 1 V16" stroke="#8a8a86" stroke-width="1"/><text x="274.0" y="10" font-size="9" fill="#7c7c78" font-family="Liberation Sans">90</text><path d="M274.5 14 V16" stroke="#8a8a86" stroke-width="1"/><path d="M277.5 14 V16" stroke="#8a8a86" stroke-width="1"/><path d="M280.5 14 V16" stroke="#8a8a86" stroke-width="1"/><path d="M283.5 14 V16" stroke="#8a8a86" stroke-width="1"/><path d="M286.5 12 V16" stroke="#8a8a86" stroke-width="1"/><path d="M289.5 14 V16" stroke="#8a8a86" stroke-width="1"/><path d="M292.5 14 V16" stroke="#8a8a86" stroke-width="1"/><path d="M295.5 14 V16" stroke="#8a8a86" stroke-width="1"/><path d="M297.5 14 V16" stroke="#8a8a86" stroke-width="1"/><path d="M300.5 1 V16" stroke="#8a8a86" stroke-width="1"/><text x="303.0" y="10" font-size="9" fill="#7c7c78" font-family="Liberation Sans">80</text><path d="M303.5 14 V16" stroke="#8a8a86" stroke-width="1"/><path d="M306.5 14 V16" stroke="#8a8a86" stroke-width="1"/><path d="M309.5 14 V16" stroke="#8a8a86" stroke-width="1"/><path d="M312.5 14 V16" stroke="#8a8a86" stroke-width="1"/><path d="M315.5 12 V16" stroke="#8a8a86" stroke-width="1"/><path d="M318.5 14 V16" stroke="#8a8a86" stroke-width="1"/><path d="M321.5 14 V16" stroke="#8a8a86" stroke-width="1"/><path d="M324.5 14 V16" stroke="#8a8a86" stroke-width="1"/><path d="M327.5 14 V16" stroke="#8a8a86" stroke-width="1"/><path d="M330.5 1 V16" stroke="#8a8a86" stroke-width="1"/><text x="333.0" y="10" font-size="9" fill="#7c7c78" font-family="Liberation Sans">70</text><path d="M332.5 14 V16" stroke="#8a8a86" stroke-width="1"/><path d="M335.5 14 V16" stroke="#8a8a86" stroke-width="1"/><path d="M338.5 14 V16" stroke="#8a8a86" stroke-width="1"/><path d="M341.5 14 V16" stroke="#8a8a86" stroke-width="1"/><path d="M344.5 12 V16" stroke="#8a8a86" stroke-width="1"/><path d="M347.5 14 V16" stroke="#8a8a86" stroke-width="1"/><path d="M350.5 14 V16" stroke="#8a8a86" stroke-width="1"/><path d="M353.5 14 V16" stroke="#8a8a86" stroke-width="1"/><path d="M356.5 14 V16" stroke="#8a8a86" stroke-width="1"/><path d="M359.5 1 V16" stroke="#8a8a86" stroke-width="1"/><text x="362.0" y="10" font-size="9" fill="#7c7c78" font-family="Liberation Sans">60</text><path d="M362.5 14 V16" stroke="#8a8a86" stroke-width="1"/><path d="M365.5 14 V16" stroke="#8a8a86" stroke-width="1"/><path d="M367.5 14 V16" stroke="#8a8a86" stroke-width="1"/><path d="M370.5 14 V16" stroke="#8a8a86" stroke-width="1"/><path d="M373.5 12 V16" stroke="#8a8a86" stroke-width="1"/><path d="M376.5 14 V16" stroke="#8a8a86" stroke-width="1"/><path d="M379.5 14 V16" stroke="#8a8a86" stroke-width="1"/><path d="M382.5 14 V16" stroke="#8a8a86" stroke-width="1"/><path d="M385.5 14 V16" stroke="#8a8a86" stroke-width="1"/><path d="M388.5 1 V16" stroke="#8a8a86" stroke-width="1"/><text x="391.0" y="10" font-size="9" fill="#7c7c78" font-family="Liberation Sans">50</text><path d="M391.5 14 V16" stroke="#8a8a86" stroke-width="1"/><path d="M394.5 14 V16" stroke="#8a8a86" stroke-width="1"/><path d="M397.5 14 V16" stroke="#8a8a86" stroke-width="1"/><path d="M400.5 14 V16" stroke="#8a8a86" stroke-width="1"/><path d="M402.5 12 V16" stroke="#8a8a86" stroke-width="1"/><path d="M405.5 14 V16" stroke="#8a8a86" stroke-width="1"/><path d="M408.5 14 V16" stroke="#8a8a86" stroke-width="1"/><path d="M411.5 14 V16" stroke="#8a8a86" stroke-width="1"/><path d="M414.5 14 V16" stroke="#8a8a86" stroke-width="1"/><path d="M417.5 1 V16" stroke="#8a8a86" stroke-width="1"/><text x="420.0" y="10" font-size="9" fill="#7c7c78" font-family="Liberation Sans">40</text><path d="M420.5 14 V16" stroke="#8a8a86" stroke-width="1"/><path d="M423.5 14 V16" stroke="#8a8a86" stroke-width="1"/><path d="M426.5 14 V16" stroke="#8a8a86" stroke-width="1"/><path d="M429.5 14 V16" stroke="#8a8a86" stroke-width="1"/><path d="M432.5 12 V16" stroke="#8a8a86" stroke-width="1"/><path d="M435.5 14 V16" stroke="#8a8a86" stroke-width="1"/><path d="M438.5 14 V16" stroke="#8a8a86" stroke-width="1"/><path d="M440.5 14 V16" stroke="#8a8a86" stroke-width="1"/><path d="M443.5 14 V16" stroke="#8a8a86" stroke-width="1"/><path d="M446.5 1 V16" stroke="#8a8a86" stroke-width="1"/><text x="449.0" y="10" font-size="9" fill="#7c7c78" font-family="Liberation Sans">30</text><path d="M449.5 14 V16" stroke="#8a8a86" stroke-width="1"/><path d="M452.5 14 V16" stroke="#8a8a86" stroke-width="1"/><path d="M455.5 14 V16" stroke="#8a8a86" stroke-width="1"/><path d="M458.5 14 V16" stroke="#8a8a86" stroke-width="1"/><path d="M461.5 12 V16" stroke="#8a8a86" stroke-width="1"/><path d="M464.5 14 V16" stroke="#8a8a86" stroke-width="1"/><path d="M467.5 14 V16" stroke="#8a8a86" stroke-width="1"/><path d="M470.5 14 V16" stroke="#8a8a86" stroke-width="1"/><path d="M473.5 14 V16" stroke="#8a8a86" stroke-width="1"/><path d="M475.5 1 V16" stroke="#8a8a86" stroke-width="1"/><text x="478.0" y="10" font-size="9" fill="#7c7c78" font-family="Liberation Sans">20</text><path d="M478.5 14 V16" stroke="#8a8a86" stroke-width="1"/><path d="M481.5 14 V16" stroke="#8a8a86" stroke-width="1"/><path d="M484.5 14 V16" stroke="#8a8a86" stroke-width="1"/><path d="M487.5 14 V16" stroke="#8a8a86" stroke-width="1"/><path d="M490.5 12 V16" stroke="#8a8a86" stroke-width="1"/><path d="M493.5 14 V16" stroke="#8a8a86" stroke-width="1"/><path d="M496.5 14 V16" stroke="#8a8a86" stroke-width="1"/><path d="M499.5 14 V16" stroke="#8a8a86" stroke-width="1"/><path d="M502.5 14 V16" stroke="#8a8a86" stroke-width="1"/><path d="M505.5 1 V16" stroke="#8a8a86" stroke-width="1"/><text x="508.0" y="10" font-size="9" fill="#7c7c78" font-family="Liberation Sans">10</text><path d="M508.5 14 V16" stroke="#8a8a86" stroke-width="1"/><path d="M510.5 14 V16" stroke="#8a8a86" stroke-width="1"/><path d="M513.5 14 V16" stroke="#8a8a86" stroke-width="1"/><path d="M516.5 14 V16" stroke="#8a8a86" stroke-width="1"/><path d="M519.5 12 V16" stroke="#8a8a86" stroke-width="1"/><path d="M522.5 14 V16" stroke="#8a8a86" stroke-width="1"/><path d="M525.5 14 V16" stroke="#8a8a86" stroke-width="1"/><path d="M528.5 14 V16" stroke="#8a8a86" stroke-width="1"/><path d="M531.5 14 V16" stroke="#8a8a86" stroke-width="1"/><path d="M534.5 1 V16" stroke="#8a8a86" stroke-width="1"/><text x="537.0" y="10" font-size="9" fill="#7c7c78" font-family="Liberation Sans">0</text><path d="M537.5 14 V16" stroke="#8a8a86" stroke-width="1"/><path d="M540.5 14 V16" stroke="#8a8a86" stroke-width="1"/><path d="M543.5 14 V16" stroke="#8a8a86" stroke-width="1"/><path d="M545.5 14 V16" stroke="#8a8a86" stroke-width="1"/><path d="M548.5 12 V16" stroke="#8a8a86" stroke-width="1"/><path d="M551.5 14 V16" stroke="#8a8a86" stroke-width="1"/><path d="M554.5 14 V16" stroke="#8a8a86" stroke-width="1"/><path d="M557.5 14 V16" stroke="#8a8a86" stroke-width="1"/><path d="M560.5 14 V16" stroke="#8a8a86" stroke-width="1"/><path d="M563.5 1 V16" stroke="#8a8a86" stroke-width="1"/><text x="566.0" y="10" font-size="9" fill="#7c7c78" font-family="Liberation Sans">10</text><path d="M566.5 14 V16" stroke="#8a8a86" stroke-width="1"/><path d="M569.5 14 V16" stroke="#8a8a86" stroke-width="1"/><path d="M572.5 14 V16" stroke="#8a8a86" stroke-width="1"/><path d="M575.5 14 V16" stroke="#8a8a86" stroke-width="1"/><path d="M578.5 12 V16" stroke="#8a8a86" stroke-width="1"/><path d="M580.5 14 V16" stroke="#8a8a86" stroke-width="1"/><path d="M583.5 14 V16" stroke="#8a8a86" stroke-width="1"/><path d="M586.5 14 V16" stroke="#8a8a86" stroke-width="1"/><path d="M589.5 14 V16" stroke="#8a8a86" stroke-width="1"/><path d="M592.5 1 V16" stroke="#8a8a86" stroke-width="1"/><text x="595.0" y="10" font-size="9" fill="#7c7c78" font-family="Liberation Sans">20</text><path d="M595.5 14 V16" stroke="#8a8a86" stroke-width="1"/><path d="M598.5 14 V16" stroke="#8a8a86" stroke-width="1"/><path d="M601.5 14 V16" stroke="#8a8a86" stroke-width="1"/><path d="M604.5 14 V16" stroke="#8a8a86" stroke-width="1"/><path d="M607.5 12 V16" stroke="#8a8a86" stroke-width="1"/><path d="M610.5 14 V16" stroke="#8a8a86" stroke-width="1"/><path d="M613.5 14 V16" stroke="#8a8a86" stroke-width="1"/><path d="M616.5 14 V16" stroke="#8a8a86" stroke-width="1"/><path d="M618.5 14 V16" stroke="#8a8a86" stroke-width="1"/><path d="M621.5 1 V16" stroke="#8a8a86" stroke-width="1"/><text x="624.0" y="10" font-size="9" fill="#7c7c78" font-family="Liberation Sans">30</text><path d="M624.5 14 V16" stroke="#8a8a86" stroke-width="1"/><path d="M627.5 14 V16" stroke="#8a8a86" stroke-width="1"/><path d="M630.5 14 V16" stroke="#8a8a86" stroke-width="1"/><path d="M633.5 14 V16" stroke="#8a8a86" stroke-width="1"/><path d="M636.5 12 V16" stroke="#8a8a86" stroke-width="1"/><path d="M639.5 14 V16" stroke="#8a8a86" stroke-width="1"/><path d="M642.5 14 V16" stroke="#8a8a86" stroke-width="1"/><path d="M645.5 14 V16" stroke="#8a8a86" stroke-width="1"/><path d="M648.5 14 V16" stroke="#8a8a86" stroke-width="1"/><path d="M651.5 1 V16" stroke="#8a8a86" stroke-width="1"/><text x="654.0" y="10" font-size="9" fill="#7c7c78" font-family="Liberation Sans">40</text><path d="M653.5 14 V16" stroke="#8a8a86" stroke-width="1"/><path d="M656.5 14 V16" stroke="#8a8a86" stroke-width="1"/><path d="M659.5 14 V16" stroke="#8a8a86" stroke-width="1"/><path d="M662.5 14 V16" stroke="#8a8a86" stroke-width="1"/><path d="M665.5 12 V16" stroke="#8a8a86" stroke-width="1"/><path d="M668.5 14 V16" stroke="#8a8a86" stroke-width="1"/><path d="M671.5 14 V16" stroke="#8a8a86" stroke-width="1"/><path d="M674.5 14 V16" stroke="#8a8a86" stroke-width="1"/><path d="M677.5 14 V16" stroke="#8a8a86" stroke-width="1"/><path d="M680.5 1 V16" stroke="#8a8a86" stroke-width="1"/><text x="683.0" y="10" font-size="9" fill="#7c7c78" font-family="Liberation Sans">50</text><path d="M683.5 14 V16" stroke="#8a8a86" stroke-width="1"/><path d="M686.5 14 V16" stroke="#8a8a86" stroke-width="1"/><path d="M688.5 14 V16" stroke="#8a8a86" stroke-width="1"/><path d="M691.5 14 V16" stroke="#8a8a86" stroke-width="1"/><path d="M694.5 12 V16" stroke="#8a8a86" stroke-width="1"/><path d="M697.5 14 V16" stroke="#8a8a86" stroke-width="1"/><path d="M700.5 14 V16" stroke="#8a8a86" stroke-width="1"/><path d="M703.5 14 V16" stroke="#8a8a86" stroke-width="1"/><path d="M706.5 14 V16" stroke="#8a8a86" stroke-width="1"/><path d="M709.5 1 V16" stroke="#8a8a86" stroke-width="1"/><text x="712.0" y="10" font-size="9" fill="#7c7c78" font-family="Liberation Sans">60</text><path d="M712.5 14 V16" stroke="#8a8a86" stroke-width="1"/><path d="M715.5 14 V16" stroke="#8a8a86" stroke-width="1"/><path d="M718.5 14 V16" stroke="#8a8a86" stroke-width="1"/><path d="M721.5 14 V16" stroke="#8a8a86" stroke-width="1"/><path d="M723.5 12 V16" stroke="#8a8a86" stroke-width="1"/><path d="M726.5 14 V16" stroke="#8a8a86" stroke-width="1"/><path d="M729.5 14 V16" stroke="#8a8a86" stroke-width="1"/><path d="M732.5 14 V16" stroke="#8a8a86" stroke-width="1"/><path d="M735.5 14 V16" stroke="#8a8a86" stroke-width="1"/><path d="M738.5 1 V16" stroke="#8a8a86" stroke-width="1"/><text x="741.0" y="10" font-size="9" fill="#7c7c78" font-family="Liberation Sans">70</text><path d="M741.5 14 V16" stroke="#8a8a86" stroke-width="1"/><path d="M744.5 14 V16" stroke="#8a8a86" stroke-width="1"/><path d="M747.5 14 V16" stroke="#8a8a86" stroke-width="1"/><path d="M750.5 14 V16" stroke="#8a8a86" stroke-width="1"/><path d="M753.5 12 V16" stroke="#8a8a86" stroke-width="1"/><path d="M756.5 14 V16" stroke="#8a8a86" stroke-width="1"/><path d="M758.5 14 V16" stroke="#8a8a86" stroke-width="1"/><path d="M761.5 14 V16" stroke="#8a8a86" stroke-width="1"/><path d="M764.5 14 V16" stroke="#8a8a86" stroke-width="1"/><path d="M767.5 1 V16" stroke="#8a8a86" stroke-width="1"/><text x="770.0" y="10" font-size="9" fill="#7c7c78" font-family="Liberation Sans">80</text><path d="M770.5 14 V16" stroke="#8a8a86" stroke-width="1"/><path d="M773.5 14 V16" stroke="#8a8a86" stroke-width="1"/><path d="M776.5 14 V16" stroke="#8a8a86" stroke-width="1"/><path d="M779.5 14 V16" stroke="#8a8a86" stroke-width="1"/><path d="M782.5 12 V16" stroke="#8a8a86" stroke-width="1"/><path d="M785.5 14 V16" stroke="#8a8a86" stroke-width="1"/><path d="M788.5 14 V16" stroke="#8a8a86" stroke-width="1"/><path d="M791.5 14 V16" stroke="#8a8a86" stroke-width="1"/><path d="M794.5 14 V16" stroke="#8a8a86" stroke-width="1"/><path d="M796.5 1 V16" stroke="#8a8a86" stroke-width="1"/><text x="799.0" y="10" font-size="9" fill="#7c7c78" font-family="Liberation Sans">90</text><path d="M799.5 14 V16" stroke="#8a8a86" stroke-width="1"/><path d="M802.5 14 V16" stroke="#8a8a86" stroke-width="1"/><path d="M805.5 14 V16" stroke="#8a8a86" stroke-width="1"/><path d="M808.5 14 V16" stroke="#8a8a86" stroke-width="1"/><path d="M811.5 12 V16" stroke="#8a8a86" stroke-width="1"/><path d="M814.5 14 V16" stroke="#8a8a86" stroke-width="1"/><path d="M817.5 14 V16" stroke="#8a8a86" stroke-width="1"/><path d="M820.5 14 V16" stroke="#8a8a86" stroke-width="1"/><path d="M823.5 14 V16" stroke="#8a8a86" stroke-width="1"/><path d="M826.5 1 V16" stroke="#8a8a86" stroke-width="1"/><text x="829.0" y="10" font-size="9" fill="#7c7c78" font-family="Liberation Sans">100</text><path d="M829.5 14 V16" stroke="#8a8a86" stroke-width="1"/><path d="M831.5 14 V16" stroke="#8a8a86" stroke-width="1"/><path d="M834.5 14 V16" stroke="#8a8a86" stroke-width="1"/><path d="M837.5 14 V16" stroke="#8a8a86" stroke-width="1"/><path d="M840.5 12 V16" stroke="#8a8a86" stroke-width="1"/><path d="M843.5 14 V16" stroke="#8a8a86" stroke-width="1"/><path d="M846.5 14 V16" stroke="#8a8a86" stroke-width="1"/><path d="M849.5 14 V16" stroke="#8a8a86" stroke-width="1"/><path d="M852.5 14 V16" stroke="#8a8a86" stroke-width="1"/><path d="M855.5 1 V16" stroke="#8a8a86" stroke-width="1"/><text x="858.0" y="10" font-size="9" fill="#7c7c78" font-family="Liberation Sans">110</text><path d="M858.5 14 V16" stroke="#8a8a86" stroke-width="1"/><path d="M861.5 14 V16" stroke="#8a8a86" stroke-width="1"/><path d="M864.5 14 V16" stroke="#8a8a86" stroke-width="1"/><path d="M866.5 14 V16" stroke="#8a8a86" stroke-width="1"/><path d="M869.5 12 V16" stroke="#8a8a86" stroke-width="1"/><path d="M872.5 14 V16" stroke="#8a8a86" stroke-width="1"/><path d="M875.5 14 V16" stroke="#8a8a86" stroke-width="1"/><path d="M878.5 14 V16" stroke="#8a8a86" stroke-width="1"/><path d="M881.5 14 V16" stroke="#8a8a86" stroke-width="1"/><path d="M884.5 1 V16" stroke="#8a8a86" stroke-width="1"/><text x="887.0" y="10" font-size="9" fill="#7c7c78" font-family="Liberation Sans">120</text><path d="M887.5 14 V16" stroke="#8a8a86" stroke-width="1"/><path d="M890.5 14 V16" stroke="#8a8a86" stroke-width="1"/><path d="M893.5 14 V16" stroke="#8a8a86" stroke-width="1"/><path d="M896.5 14 V16" stroke="#8a8a86" stroke-width="1"/><path d="M899.5 12 V16" stroke="#8a8a86" stroke-width="1"/><path d="M901.5 14 V16" stroke="#8a8a86" stroke-width="1"/><path d="M904.5 14 V16" stroke="#8a8a86" stroke-width="1"/><path d="M907.5 14 V16" stroke="#8a8a86" stroke-width="1"/><path d="M910.5 14 V16" stroke="#8a8a86" stroke-width="1"/><path d="M913.5 1 V16" stroke="#8a8a86" stroke-width="1"/><text x="916.0" y="10" font-size="9" fill="#7c7c78" font-family="Liberation Sans">130</text><path d="M916.5 14 V16" stroke="#8a8a86" stroke-width="1"/><path d="M919.5 14 V16" stroke="#8a8a86" stroke-width="1"/><path d="M922.5 14 V16" stroke="#8a8a86" stroke-width="1"/><path d="M925.5 14 V16" stroke="#8a8a86" stroke-width="1"/><path d="M928.5 12 V16" stroke="#8a8a86" stroke-width="1"/><path d="M931.5 14 V16" stroke="#8a8a86" stroke-width="1"/><path d="M934.5 14 V16" stroke="#8a8a86" stroke-width="1"/><path d="M936.5 14 V16" stroke="#8a8a86" stroke-width="1"/><path d="M939.5 14 V16" stroke="#8a8a86" stroke-width="1"/><path d="M942.5 1 V16" stroke="#8a8a86" stroke-width="1"/><text x="945.0" y="10" font-size="9" fill="#7c7c78" font-family="Liberation Sans">140</text><path d="M945.5 14 V16" stroke="#8a8a86" stroke-width="1"/><path d="M948.5 14 V16" stroke="#8a8a86" stroke-width="1"/><path d="M951.5 14 V16" stroke="#8a8a86" stroke-width="1"/><path d="M954.5 14 V16" stroke="#8a8a86" stroke-width="1"/><path d="M957.5 12 V16" stroke="#8a8a86" stroke-width="1"/><path d="M960.5 14 V16" stroke="#8a8a86" stroke-width="1"/><path d="M963.5 14 V16" stroke="#8a8a86" stroke-width="1"/><path d="M966.5 14 V16" stroke="#8a8a86" stroke-width="1"/><path d="M969.5 14 V16" stroke="#8a8a86" stroke-width="1"/><path d="M972.5 1 V16" stroke="#8a8a86" stroke-width="1"/><text x="975.0" y="10" font-size="9" fill="#7c7c78" font-family="Liberation Sans">150</text><path d="M974.5 14 V16" stroke="#8a8a86" stroke-width="1"/><path d="M977.5 14 V16" stroke="#8a8a86" stroke-width="1"/><path d="M980.5 14 V16" stroke="#8a8a86" stroke-width="1"/><path d="M983.5 14 V16" stroke="#8a8a86" stroke-width="1"/><path d="M986.5 12 V16" stroke="#8a8a86" stroke-width="1"/><path d="M989.5 14 V16" stroke="#8a8a86" stroke-width="1"/><path d="M992.5 14 V16" stroke="#8a8a86" stroke-width="1"/><path d="M995.5 14 V16" stroke="#8a8a86" stroke-width="1"/><path d="M998.5 14 V16" stroke="#8a8a86" stroke-width="1"/><path d="M1001.5 1 V16" stroke="#8a8a86" stroke-width="1"/><text x="1004.0" y="10" font-size="9" fill="#7c7c78" font-family="Liberation Sans">160</text><path d="M1004.5 14 V16" stroke="#8a8a86" stroke-width="1"/><path d="M1007.5 14 V16" stroke="#8a8a86" stroke-width="1"/><path d="M1009.5 14 V16" stroke="#8a8a86" stroke-width="1"/><path d="M1012.5 14 V16" stroke="#8a8a86" stroke-width="1"/><path d="M1015.5 12 V16" stroke="#8a8a86" stroke-width="1"/><path d="M1018.5 14 V16" stroke="#8a8a86" stroke-width="1"/><path d="M1021.5 14 V16" stroke="#8a8a86" stroke-width="1"/><path d="M1024.5 14 V16" stroke="#8a8a86" stroke-width="1"/><path d="M1027.5 14 V16" stroke="#8a8a86" stroke-width="1"/><path d="M1030.5 1 V16" stroke="#8a8a86" stroke-width="1"/><text x="1033.0" y="10" font-size="9" fill="#7c7c78" font-family="Liberation Sans">170</text><path d="M1033.5 14 V16" stroke="#8a8a86" stroke-width="1"/><path d="M1036.5 14 V16" stroke="#8a8a86" stroke-width="1"/><path d="M1039.5 14 V16" stroke="#8a8a86" stroke-width="1"/><path d="M1042.5 14 V16" stroke="#8a8a86" stroke-width="1"/><path d="M1044.5 12 V16" stroke="#8a8a86" stroke-width="1"/><path d="M1047.5 14 V16" stroke="#8a8a86" stroke-width="1"/><path d="M1050.5 14 V16" stroke="#8a8a86" stroke-width="1"/><path d="M1053.5 14 V16" stroke="#8a8a86" stroke-width="1"/><path d="M1056.5 14 V16" stroke="#8a8a86" stroke-width="1"/><path d="M1059.5 1 V16" stroke="#8a8a86" stroke-width="1"/><text x="1062.0" y="10" font-size="9" fill="#7c7c78" font-family="Liberation Sans">180</text><path d="M1062.5 14 V16" stroke="#8a8a86" stroke-width="1"/><path d="M1065.5 14 V16" stroke="#8a8a86" stroke-width="1"/><path d="M1068.5 14 V16" stroke="#8a8a86" stroke-width="1"/><path d="M1071.5 14 V16" stroke="#8a8a86" stroke-width="1"/><path d="M1074.5 12 V16" stroke="#8a8a86" stroke-width="1"/><path d="M1077.5 14 V16" stroke="#8a8a86" stroke-width="1"/><path d="M1079.5 14 V16" stroke="#8a8a86" stroke-width="1"/><path d="M1082.5 14 V16" stroke="#8a8a86" stroke-width="1"/><path d="M1085.5 14 V16" stroke="#8a8a86" stroke-width="1"/><path d="M1088.5 1 V16" stroke="#8a8a86" stroke-width="1"/><text x="1091.0" y="10" font-size="9" fill="#7c7c78" font-family="Liberation Sans">190</text><path d="M1091.5 14 V16" stroke="#8a8a86" stroke-width="1"/><path d="M1094.5 14 V16" stroke="#8a8a86" stroke-width="1"/><path d="M1097.5 14 V16" stroke="#8a8a86" stroke-width="1"/><path d="M1100.5 14 V16" stroke="#8a8a86" stroke-width="1"/><path d="M1103.5 12 V16" stroke="#8a8a86" stroke-width="1"/><path d="M1106.5 14 V16" stroke="#8a8a86" stroke-width="1"/><path d="M1109.5 14 V16" stroke="#8a8a86" stroke-width="1"/><path d="M1112.5 14 V16" stroke="#8a8a86" stroke-width="1"/><path d="M1114.5 14 V16" stroke="#8a8a86" stroke-width="1"/><path d="M1117.5 1 V16" stroke="#8a8a86" stroke-width="1"/><text x="1120.0" y="10" font-size="9" fill="#7c7c78" font-family="Liberation Sans">200</text><path d="M1120.5 14 V16" stroke="#8a8a86" stroke-width="1"/><path d="M1123.5 14 V16" stroke="#8a8a86" stroke-width="1"/><path d="M1126.5 14 V16" stroke="#8a8a86" stroke-width="1"/><path d="M1129.5 14 V16" stroke="#8a8a86" stroke-width="1"/><path d="M1132.5 12 V16" stroke="#8a8a86" stroke-width="1"/><path d="M1135.5 14 V16" stroke="#8a8a86" stroke-width="1"/><path d="M1138.5 14 V16" stroke="#8a8a86" stroke-width="1"/><path d="M1141.5 14 V16" stroke="#8a8a86" stroke-width="1"/><path d="M1144.5 14 V16" stroke="#8a8a86" stroke-width="1"/><path d="M1147.5 1 V16" stroke="#8a8a86" stroke-width="1"/><text x="1150.0" y="10" font-size="9" fill="#7c7c78" font-family="Liberation Sans">210</text><path d="M1149.5 14 V16" stroke="#8a8a86" stroke-width="1"/><path d="M1152.5 14 V16" stroke="#8a8a86" stroke-width="1"/><path d="M1155.5 14 V16" stroke="#8a8a86" stroke-width="1"/><path d="M1158.5 14 V16" stroke="#8a8a86" stroke-width="1"/><path d="M1161.5 12 V16" stroke="#8a8a86" stroke-width="1"/><path d="M1164.5 14 V16" stroke="#8a8a86" stroke-width="1"/><path d="M1167.5 14 V16" stroke="#8a8a86" stroke-width="1"/><path d="M1170.5 14 V16" stroke="#8a8a86" stroke-width="1"/><path d="M1173.5 14 V16" stroke="#8a8a86" stroke-width="1"/><path d="M1176.5 1 V16" stroke="#8a8a86" stroke-width="1"/><text x="1179.0" y="10" font-size="9" fill="#7c7c78" font-family="Liberation Sans">220</text><path d="M1179.5 14 V16" stroke="#8a8a86" stroke-width="1"/><path d="M1182.5 14 V16" stroke="#8a8a86" stroke-width="1"/><path d="M1185.5 14 V16" stroke="#8a8a86" stroke-width="1"/><path d="M1187.5 14 V16" stroke="#8a8a86" stroke-width="1"/><path d="M1190.5 12 V16" stroke="#8a8a86" stroke-width="1"/><path d="M1193.5 14 V16" stroke="#8a8a86" stroke-width="1"/><path d="M1196.5 14 V16" stroke="#8a8a86" stroke-width="1"/><path d="M1199.5 14 V16" stroke="#8a8a86" stroke-width="1"/><path d="M1202.5 14 V16" stroke="#8a8a86" stroke-width="1"/><path d="M1205.5 1 V16" stroke="#8a8a86" stroke-width="1"/><text x="1208.0" y="10" font-size="9" fill="#7c7c78" font-family="Liberation Sans">230</text><path d="M1208.5 14 V16" stroke="#8a8a86" stroke-width="1"/><path d="M1211.5 14 V16" stroke="#8a8a86" stroke-width="1"/><path d="M1214.5 14 V16" stroke="#8a8a86" stroke-width="1"/><path d="M1217.5 14 V16" stroke="#8a8a86" stroke-width="1"/><path d="M1220.5 12 V16" stroke="#8a8a86" stroke-width="1"/><path d="M1222.5 14 V16" stroke="#8a8a86" stroke-width="1"/><path d="M1225.5 14 V16" stroke="#8a8a86" stroke-width="1"/><path d="M1228.5 14 V16" stroke="#8a8a86" stroke-width="1"/><path d="M1231.5 14 V16" stroke="#8a8a86" stroke-width="1"/><path d="M1234.5 1 V16" stroke="#8a8a86" stroke-width="1"/><text x="1237.0" y="10" font-size="9" fill="#7c7c78" font-family="Liberation Sans">240</text><path d="M1237.5 14 V16" stroke="#8a8a86" stroke-width="1"/><path d="M1240.5 14 V16" stroke="#8a8a86" stroke-width="1"/><path d="M1243.5 14 V16" stroke="#8a8a86" stroke-width="1"/><path d="M1246.5 14 V16" stroke="#8a8a86" stroke-width="1"/><path d="M1249.5 12 V16" stroke="#8a8a86" stroke-width="1"/><path d="M1252.5 14 V16" stroke="#8a8a86" stroke-width="1"/><path d="M1255.5 14 V16" stroke="#8a8a86" stroke-width="1"/><path d="M1257.5 14 V16" stroke="#8a8a86" stroke-width="1"/><path d="M1260.5 14 V16" stroke="#8a8a86" stroke-width="1"/><path d="M1263.5 1 V16" stroke="#8a8a86" stroke-width="1"/><text x="1266.0" y="10" font-size="9" fill="#7c7c78" font-family="Liberation Sans">250</text><path d="M1266.5 14 V16" stroke="#8a8a86" stroke-width="1"/><path d="M1269.5 14 V16" stroke="#8a8a86" stroke-width="1"/><path d="M1272.5 14 V16" stroke="#8a8a86" stroke-width="1"/><path d="M1275.5 14 V16" stroke="#8a8a86" stroke-width="1"/><path d="M1278.5 12 V16" stroke="#8a8a86" stroke-width="1"/><path d="M1281.5 14 V16" stroke="#8a8a86" stroke-width="1"/><path d="M1284.5 14 V16" stroke="#8a8a86" stroke-width="1"/><path d="M1287.5 14 V16" stroke="#8a8a86" stroke-width="1"/><path d="M1290.5 14 V16" stroke="#8a8a86" stroke-width="1"/><path d="M1292.5 1 V16" stroke="#8a8a86" stroke-width="1"/><text x="1295.0" y="10" font-size="9" fill="#7c7c78" font-family="Liberation Sans">260</text><path d="M1295.5 14 V16" stroke="#8a8a86" stroke-width="1"/><path d="M1298.5 14 V16" stroke="#8a8a86" stroke-width="1"/><path d="M1301.5 14 V16" stroke="#8a8a86" stroke-width="1"/><path d="M1304.5 14 V16" stroke="#8a8a86" stroke-width="1"/><path d="M1307.5 12 V16" stroke="#8a8a86" stroke-width="1"/><path d="M1310.5 14 V16" stroke="#8a8a86" stroke-width="1"/><path d="M1313.5 14 V16" stroke="#8a8a86" stroke-width="1"/><path d="M1316.5 14 V16" stroke="#8a8a86" stroke-width="1"/><path d="M1319.5 14 V16" stroke="#8a8a86" stroke-width="1"/><path d="M1322.5 1 V16" stroke="#8a8a86" stroke-width="1"/><text x="1325.0" y="10" font-size="9" fill="#7c7c78" font-family="Liberation Sans">270</text><path d="M1325.5 14 V16" stroke="#8a8a86" stroke-width="1"/><path d="M1327.5 14 V16" stroke="#8a8a86" stroke-width="1"/><path d="M1330.5 14 V16" stroke="#8a8a86" stroke-width="1"/><path d="M1333.5 14 V16" stroke="#8a8a86" stroke-width="1"/><path d="M1336.5 12 V16" stroke="#8a8a86" stroke-width="1"/><path d="M1339.5 14 V16" stroke="#8a8a86" stroke-width="1"/><path d="M1342.5 14 V16" stroke="#8a8a86" stroke-width="1"/><path d="M1345.5 14 V16" stroke="#8a8a86" stroke-width="1"/><path d="M1348.5 14 V16" stroke="#8a8a86" stroke-width="1"/><path d="M1351.5 1 V16" stroke="#8a8a86" stroke-width="1"/><text x="1354.0" y="10" font-size="9" fill="#7c7c78" font-family="Liberation Sans">280</text><path d="M1354.5 14 V16" stroke="#8a8a86" stroke-width="1"/><path d="M1357.5 14 V16" stroke="#8a8a86" stroke-width="1"/><path d="M1360.5 14 V16" stroke="#8a8a86" stroke-width="1"/><path d="M1363.5 14 V16" stroke="#8a8a86" stroke-width="1"/><path d="M1365.5 12 V16" stroke="#8a8a86" stroke-width="1"/><path d="M1368.5 14 V16" stroke="#8a8a86" stroke-width="1"/><path d="M1371.5 14 V16" stroke="#8a8a86" stroke-width="1"/><path d="M1374.5 14 V16" stroke="#8a8a86" stroke-width="1"/><path d="M1377.5 14 V16" stroke="#8a8a86" stroke-width="1"/><path d="M1380.5 1 V16" stroke="#8a8a86" stroke-width="1"/><text x="1383.0" y="10" font-size="9" fill="#7c7c78" font-family="Liberation Sans">290</text><path d="M1383.5 14 V16" stroke="#8a8a86" stroke-width="1"/><path d="M1386.5 14 V16" stroke="#8a8a86" stroke-width="1"/><path d="M1389.5 14 V16" stroke="#8a8a86" stroke-width="1"/><path d="M1392.5 14 V16" stroke="#8a8a86" stroke-width="1"/><path d="M1395.5 12 V16" stroke="#8a8a86" stroke-width="1"/><path d="M1398.5 14 V16" stroke="#8a8a86" stroke-width="1"/><path d="M1400.5 14 V16" stroke="#8a8a86" stroke-width="1"/><path d="M1403.5 14 V16" stroke="#8a8a86" stroke-width="1"/><path d="M1406.5 14 V16" stroke="#8a8a86" stroke-width="1"/><path d="M1409.5 1 V16" stroke="#8a8a86" stroke-width="1"/><text x="1412.0" y="10" font-size="9" fill="#7c7c78" font-family="Liberation Sans">300</text><path d="M1412.5 14 V16" stroke="#8a8a86" stroke-width="1"/><path d="M1415.5 14 V16" stroke="#8a8a86" stroke-width="1"/><path d="M1418.5 14 V16" stroke="#8a8a86" stroke-width="1"/><path d="M1421.5 14 V16" stroke="#8a8a86" stroke-width="1"/><path d="M1424.5 12 V16" stroke="#8a8a86" stroke-width="1"/><path d="M1427.5 14 V16" stroke="#8a8a86" stroke-width="1"/><path d="M1430.5 14 V16" stroke="#8a8a86" stroke-width="1"/><path d="M1433.5 14 V16" stroke="#8a8a86" stroke-width="1"/><path d="M1435.5 14 V16" stroke="#8a8a86" stroke-width="1"/><path d="M1438.5 1 V16" stroke="#8a8a86" stroke-width="1"/><text x="1441.0" y="10" font-size="9" fill="#7c7c78" font-family="Liberation Sans">310</text></svg><svg style="left:73px;top:141px;" width="16" height="882" viewBox="0 0 16 882"><path d="M14 -0.5 H16" stroke="#8a8a86" stroke-width="1"/><path d="M14 2.5 H16" stroke="#8a8a86" stroke-width="1"/><path d="M14 5.5 H16" stroke="#8a8a86" stroke-width="1"/><path d="M1 8.5 H16" stroke="#8a8a86" stroke-width="1"/><text x="4" y="17.5" font-size="8.5" fill="#6c6c68" font-family="Liberation Sans">0</text><path d="M14 10.5 H16" stroke="#8a8a86" stroke-width="1"/><path d="M14 13.5 H16" stroke="#8a8a86" stroke-width="1"/><path d="M14 16.5 H16" stroke="#8a8a86" stroke-width="1"/><path d="M14 19.5 H16" stroke="#8a8a86" stroke-width="1"/><path d="M12 22.5 H16" stroke="#8a8a86" stroke-width="1"/><path d="M14 25.5 H16" stroke="#8a8a86" stroke-width="1"/><path d="M14 28.5 H16" stroke="#8a8a86" stroke-width="1"/><path d="M14 31.5 H16" stroke="#8a8a86" stroke-width="1"/><path d="M14 34.5 H16" stroke="#8a8a86" stroke-width="1"/><path d="M1 37.5 H16" stroke="#8a8a86" stroke-width="1"/><text x="4" y="46.5" font-size="8.5" fill="#6c6c68" font-family="Liberation Sans">1</text><text x="4" y="54.5" font-size="8.5" fill="#6c6c68" font-family="Liberation Sans">0</text><path d="M14 40.5 H16" stroke="#8a8a86" stroke-width="1"/><path d="M14 43.5 H16" stroke="#8a8a86" stroke-width="1"/><path d="M14 45.5 H16" stroke="#8a8a86" stroke-width="1"/><path d="M14 48.5 H16" stroke="#8a8a86" stroke-width="1"/><path d="M12 51.5 H16" stroke="#8a8a86" stroke-width="1"/><path d="M14 54.5 H16" stroke="#8a8a86" stroke-width="1"/><path d="M14 57.5 H16" stroke="#8a8a86" stroke-width="1"/><path d="M14 60.5 H16" stroke="#8a8a86" stroke-width="1"/><path d="M14 63.5 H16" stroke="#8a8a86" stroke-width="1"/><path d="M1 66.5 H16" stroke="#8a8a86" stroke-width="1"/><text x="4" y="75.5" font-size="8.5" fill="#6c6c68" font-family="Liberation Sans">2</text><text x="4" y="83.5" font-size="8.5" fill="#6c6c68" font-family="Liberation Sans">0</text><path d="M14 69.5 H16" stroke="#8a8a86" stroke-width="1"/><path d="M14 72.5 H16" stroke="#8a8a86" stroke-width="1"/><path d="M14 75.5 H16" stroke="#8a8a86" stroke-width="1"/><path d="M14 78.5 H16" stroke="#8a8a86" stroke-width="1"/><path d="M12 80.5 H16" stroke="#8a8a86" stroke-width="1"/><path d="M14 83.5 H16" stroke="#8a8a86" stroke-width="1"/><path d="M14 86.5 H16" stroke="#8a8a86" stroke-width="1"/><path d="M14 89.5 H16" stroke="#8a8a86" stroke-width="1"/><path d="M14 92.5 H16" stroke="#8a8a86" stroke-width="1"/><path d="M1 95.5 H16" stroke="#8a8a86" stroke-width="1"/><text x="4" y="104.5" font-size="8.5" fill="#6c6c68" font-family="Liberation Sans">3</text><text x="4" y="112.5" font-size="8.5" fill="#6c6c68" font-family="Liberation Sans">0</text><path d="M14 98.5 H16" stroke="#8a8a86" stroke-width="1"/><path d="M14 101.5 H16" stroke="#8a8a86" stroke-width="1"/><path d="M14 104.5 H16" stroke="#8a8a86" stroke-width="1"/><path d="M14 107.5 H16" stroke="#8a8a86" stroke-width="1"/><path d="M12 110.5 H16" stroke="#8a8a86" stroke-width="1"/><path d="M14 113.5 H16" stroke="#8a8a86" stroke-width="1"/><path d="M14 115.5 H16" stroke="#8a8a86" stroke-width="1"/><path d="M14 118.5 H16" stroke="#8a8a86" stroke-width="1"/><path d="M14 121.5 H16" stroke="#8a8a86" stroke-width="1"/><path d="M1 124.5 H16" stroke="#8a8a86" stroke-width="1"/><text x="4" y="133.5" font-size="8.5" fill="#6c6c68" font-family="Liberation Sans">4</text><text x="4" y="141.5" font-size="8.5" fill="#6c6c68" font-family="Liberation Sans">0</text><path d="M14 127.5 H16" stroke="#8a8a86" stroke-width="1"/><path d="M14 130.5 H16" stroke="#8a8a86" stroke-width="1"/><path d="M14 133.5 H16" stroke="#8a8a86" stroke-width="1"/><path d="M14 136.5 H16" stroke="#8a8a86" stroke-width="1"/><path d="M12 139.5 H16" stroke="#8a8a86" stroke-width="1"/><path d="M14 142.5 H16" stroke="#8a8a86" stroke-width="1"/><path d="M14 145.5 H16" stroke="#8a8a86" stroke-width="1"/><path d="M14 148.5 H16" stroke="#8a8a86" stroke-width="1"/><path d="M14 150.5 H16" stroke="#8a8a86" stroke-width="1"/><path d="M1 153.5 H16" stroke="#8a8a86" stroke-width="1"/><text x="4" y="162.5" font-size="8.5" fill="#6c6c68" font-family="Liberation Sans">5</text><text x="4" y="170.5" font-size="8.5" fill="#6c6c68" font-family="Liberation Sans">0</text><path d="M14 156.5 H16" stroke="#8a8a86" stroke-width="1"/><path d="M14 159.5 H16" stroke="#8a8a86" stroke-width="1"/><path d="M14 162.5 H16" stroke="#8a8a86" stroke-width="1"/><path d="M14 165.5 H16" stroke="#8a8a86" stroke-width="1"/><path d="M12 168.5 H16" stroke="#8a8a86" stroke-width="1"/><path d="M14 171.5 H16" stroke="#8a8a86" stroke-width="1"/><path d="M14 174.5 H16" stroke="#8a8a86" stroke-width="1"/><path d="M14 177.5 H16" stroke="#8a8a86" stroke-width="1"/><path d="M14 180.5 H16" stroke="#8a8a86" stroke-width="1"/><path d="M1 183.5 H16" stroke="#8a8a86" stroke-width="1"/><text x="4" y="192.5" font-size="8.5" fill="#6c6c68" font-family="Liberation Sans">6</text><text x="4" y="200.5" font-size="8.5" fill="#6c6c68" font-family="Liberation Sans">0</text><path d="M14 185.5 H16" stroke="#8a8a86" stroke-width="1"/><path d="M14 188.5 H16" stroke="#8a8a86" stroke-width="1"/><path d="M14 191.5 H16" stroke="#8a8a86" stroke-width="1"/><path d="M14 194.5 H16" stroke="#8a8a86" stroke-width="1"/><path d="M12 197.5 H16" stroke="#8a8a86" stroke-width="1"/><path d="M14 200.5 H16" stroke="#8a8a86" stroke-width="1"/><path d="M14 203.5 H16" stroke="#8a8a86" stroke-width="1"/><path d="M14 206.5 H16" stroke="#8a8a86" stroke-width="1"/><path d="M14 209.5 H16" stroke="#8a8a86" stroke-width="1"/><path d="M1 212.5 H16" stroke="#8a8a86" stroke-width="1"/><text x="4" y="221.5" font-size="8.5" fill="#6c6c68" font-family="Liberation Sans">7</text><text x="4" y="229.5" font-size="8.5" fill="#6c6c68" font-family="Liberation Sans">0</text><path d="M14 215.5 H16" stroke="#8a8a86" stroke-width="1"/><path d="M14 218.5 H16" stroke="#8a8a86" stroke-width="1"/><path d="M14 221.5 H16" stroke="#8a8a86" stroke-width="1"/><path d="M14 223.5 H16" stroke="#8a8a86" stroke-width="1"/><path d="M12 226.5 H16" stroke="#8a8a86" stroke-width="1"/><path d="M14 229.5 H16" stroke="#8a8a86" stroke-width="1"/><path d="M14 232.5 H16" stroke="#8a8a86" stroke-width="1"/><path d="M14 235.5 H16" stroke="#8a8a86" stroke-width="1"/><path d="M14 238.5 H16" stroke="#8a8a86" stroke-width="1"/><path d="M1 241.5 H16" stroke="#8a8a86" stroke-width="1"/><text x="4" y="250.5" font-size="8.5" fill="#6c6c68" font-family="Liberation Sans">8</text><text x="4" y="258.5" font-size="8.5" fill="#6c6c68" font-family="Liberation Sans">0</text><path d="M14 244.5 H16" stroke="#8a8a86" stroke-width="1"/><path d="M14 247.5 H16" stroke="#8a8a86" stroke-width="1"/><path d="M14 250.5 H16" stroke="#8a8a86" stroke-width="1"/><path d="M14 253.5 H16" stroke="#8a8a86" stroke-width="1"/><path d="M12 256.5 H16" stroke="#8a8a86" stroke-width="1"/><path d="M14 258.5 H16" stroke="#8a8a86" stroke-width="1"/><path d="M14 261.5 H16" stroke="#8a8a86" stroke-width="1"/><path d="M14 264.5 H16" stroke="#8a8a86" stroke-width="1"/><path d="M14 267.5 H16" stroke="#8a8a86" stroke-width="1"/><path d="M1 270.5 H16" stroke="#8a8a86" stroke-width="1"/><text x="4" y="279.5" font-size="8.5" fill="#6c6c68" font-family="Liberation Sans">9</text><text x="4" y="287.5" font-size="8.5" fill="#6c6c68" font-family="Liberation Sans">0</text><path d="M14 273.5 H16" stroke="#8a8a86" stroke-width="1"/><path d="M14 276.5 H16" stroke="#8a8a86" stroke-width="1"/><path d="M14 279.5 H16" stroke="#8a8a86" stroke-width="1"/><path d="M14 282.5 H16" stroke="#8a8a86" stroke-width="1"/><path d="M12 285.5 H16" stroke="#8a8a86" stroke-width="1"/><path d="M14 288.5 H16" stroke="#8a8a86" stroke-width="1"/><path d="M14 291.5 H16" stroke="#8a8a86" stroke-width="1"/><path d="M14 293.5 H16" stroke="#8a8a86" stroke-width="1"/><path d="M14 296.5 H16" stroke="#8a8a86" stroke-width="1"/><path d="M1 299.5 H16" stroke="#8a8a86" stroke-width="1"/><text x="4" y="308.5" font-size="8.5" fill="#6c6c68" font-family="Liberation Sans">1</text><text x="4" y="316.5" font-size="8.5" fill="#6c6c68" font-family="Liberation Sans">0</text><text x="4" y="324.5" font-size="8.5" fill="#6c6c68" font-family="Liberation Sans">0</text><path d="M14 302.5 H16" stroke="#8a8a86" stroke-width="1"/><path d="M14 305.5 H16" stroke="#8a8a86" stroke-width="1"/><path d="M14 308.5 H16" stroke="#8a8a86" stroke-width="1"/><path d="M14 311.5 H16" stroke="#8a8a86" stroke-width="1"/><path d="M12 314.5 H16" stroke="#8a8a86" stroke-width="1"/><path d="M14 317.5 H16" stroke="#8a8a86" stroke-width="1"/><path d="M14 320.5 H16" stroke="#8a8a86" stroke-width="1"/><path d="M14 323.5 H16" stroke="#8a8a86" stroke-width="1"/><path d="M14 326.5 H16" stroke="#8a8a86" stroke-width="1"/><path d="M1 328.5 H16" stroke="#8a8a86" stroke-width="1"/><text x="4" y="337.5" font-size="8.5" fill="#6c6c68" font-family="Liberation Sans">1</text><text x="4" y="345.5" font-size="8.5" fill="#6c6c68" font-family="Liberation Sans">1</text><text x="4" y="353.5" font-size="8.5" fill="#6c6c68" font-family="Liberation Sans">0</text><path d="M14 331.5 H16" stroke="#8a8a86" stroke-width="1"/><path d="M14 334.5 H16" stroke="#8a8a86" stroke-width="1"/><path d="M14 337.5 H16" stroke="#8a8a86" stroke-width="1"/><path d="M14 340.5 H16" stroke="#8a8a86" stroke-width="1"/><path d="M12 343.5 H16" stroke="#8a8a86" stroke-width="1"/><path d="M14 346.5 H16" stroke="#8a8a86" stroke-width="1"/><path d="M14 349.5 H16" stroke="#8a8a86" stroke-width="1"/><path d="M14 352.5 H16" stroke="#8a8a86" stroke-width="1"/><path d="M14 355.5 H16" stroke="#8a8a86" stroke-width="1"/><path d="M1 358.5 H16" stroke="#8a8a86" stroke-width="1"/><text x="4" y="367.5" font-size="8.5" fill="#6c6c68" font-family="Liberation Sans">1</text><text x="4" y="375.5" font-size="8.5" fill="#6c6c68" font-family="Liberation Sans">2</text><text x="4" y="383.5" font-size="8.5" fill="#6c6c68" font-family="Liberation Sans">0</text><path d="M14 361.5 H16" stroke="#8a8a86" stroke-width="1"/><path d="M14 363.5 H16" stroke="#8a8a86" stroke-width="1"/><path d="M14 366.5 H16" stroke="#8a8a86" stroke-width="1"/><path d="M14 369.5 H16" stroke="#8a8a86" stroke-width="1"/><path d="M12 372.5 H16" stroke="#8a8a86" stroke-width="1"/><path d="M14 375.5 H16" stroke="#8a8a86" stroke-width="1"/><path d="M14 378.5 H16" stroke="#8a8a86" stroke-width="1"/><path d="M14 381.5 H16" stroke="#8a8a86" stroke-width="1"/><path d="M14 384.5 H16" stroke="#8a8a86" stroke-width="1"/><path d="M1 387.5 H16" stroke="#8a8a86" stroke-width="1"/><text x="4" y="396.5" font-size="8.5" fill="#6c6c68" font-family="Liberation Sans">1</text><text x="4" y="404.5" font-size="8.5" fill="#6c6c68" font-family="Liberation Sans">3</text><text x="4" y="412.5" font-size="8.5" fill="#6c6c68" font-family="Liberation Sans">0</text><path d="M14 390.5 H16" stroke="#8a8a86" stroke-width="1"/><path d="M14 393.5 H16" stroke="#8a8a86" stroke-width="1"/><path d="M14 396.5 H16" stroke="#8a8a86" stroke-width="1"/><path d="M14 399.5 H16" stroke="#8a8a86" stroke-width="1"/><path d="M12 401.5 H16" stroke="#8a8a86" stroke-width="1"/><path d="M14 404.5 H16" stroke="#8a8a86" stroke-width="1"/><path d="M14 407.5 H16" stroke="#8a8a86" stroke-width="1"/><path d="M14 410.5 H16" stroke="#8a8a86" stroke-width="1"/><path d="M14 413.5 H16" stroke="#8a8a86" stroke-width="1"/><path d="M1 416.5 H16" stroke="#8a8a86" stroke-width="1"/><text x="4" y="425.5" font-size="8.5" fill="#6c6c68" font-family="Liberation Sans">1</text><text x="4" y="433.5" font-size="8.5" fill="#6c6c68" font-family="Liberation Sans">4</text><text x="4" y="441.5" font-size="8.5" fill="#6c6c68" font-family="Liberation Sans">0</text><path d="M14 419.5 H16" stroke="#8a8a86" stroke-width="1"/><path d="M14 422.5 H16" stroke="#8a8a86" stroke-width="1"/><path d="M14 425.5 H16" stroke="#8a8a86" stroke-width="1"/><path d="M14 428.5 H16" stroke="#8a8a86" stroke-width="1"/><path d="M12 431.5 H16" stroke="#8a8a86" stroke-width="1"/><path d="M14 434.5 H16" stroke="#8a8a86" stroke-width="1"/><path d="M14 436.5 H16" stroke="#8a8a86" stroke-width="1"/><path d="M14 439.5 H16" stroke="#8a8a86" stroke-width="1"/><path d="M14 442.5 H16" stroke="#8a8a86" stroke-width="1"/><path d="M1 445.5 H16" stroke="#8a8a86" stroke-width="1"/><text x="4" y="454.5" font-size="8.5" fill="#6c6c68" font-family="Liberation Sans">1</text><text x="4" y="462.5" font-size="8.5" fill="#6c6c68" font-family="Liberation Sans">5</text><text x="4" y="470.5" font-size="8.5" fill="#6c6c68" font-family="Liberation Sans">0</text><path d="M14 448.5 H16" stroke="#8a8a86" stroke-width="1"/><path d="M14 451.5 H16" stroke="#8a8a86" stroke-width="1"/><path d="M14 454.5 H16" stroke="#8a8a86" stroke-width="1"/><path d="M14 457.5 H16" stroke="#8a8a86" stroke-width="1"/><path d="M12 460.5 H16" stroke="#8a8a86" stroke-width="1"/><path d="M14 463.5 H16" stroke="#8a8a86" stroke-width="1"/><path d="M14 466.5 H16" stroke="#8a8a86" stroke-width="1"/><path d="M14 469.5 H16" stroke="#8a8a86" stroke-width="1"/><path d="M14 471.5 H16" stroke="#8a8a86" stroke-width="1"/><path d="M1 474.5 H16" stroke="#8a8a86" stroke-width="1"/><text x="4" y="483.5" font-size="8.5" fill="#6c6c68" font-family="Liberation Sans">1</text><text x="4" y="491.5" font-size="8.5" fill="#6c6c68" font-family="Liberation Sans">6</text><text x="4" y="499.5" font-size="8.5" fill="#6c6c68" font-family="Liberation Sans">0</text><path d="M14 477.5 H16" stroke="#8a8a86" stroke-width="1"/><path d="M14 480.5 H16" stroke="#8a8a86" stroke-width="1"/><path d="M14 483.5 H16" stroke="#8a8a86" stroke-width="1"/><path d="M14 486.5 H16" stroke="#8a8a86" stroke-width="1"/><path d="M12 489.5 H16" stroke="#8a8a86" stroke-width="1"/><path d="M14 492.5 H16" stroke="#8a8a86" stroke-width="1"/><path d="M14 495.5 H16" stroke="#8a8a86" stroke-width="1"/><path d="M14 498.5 H16" stroke="#8a8a86" stroke-width="1"/><path d="M14 501.5 H16" stroke="#8a8a86" stroke-width="1"/><path d="M1 504.5 H16" stroke="#8a8a86" stroke-width="1"/><text x="4" y="513.5" font-size="8.5" fill="#6c6c68" font-family="Liberation Sans">1</text><text x="4" y="521.5" font-size="8.5" fill="#6c6c68" font-family="Liberation Sans">7</text><text x="4" y="529.5" font-size="8.5" fill="#6c6c68" font-family="Liberation Sans">0</text><path d="M14 506.5 H16" stroke="#8a8a86" stroke-width="1"/><path d="M14 509.5 H16" stroke="#8a8a86" stroke-width="1"/><path d="M14 512.5 H16" stroke="#8a8a86" stroke-width="1"/><path d="M14 515.5 H16" stroke="#8a8a86" stroke-width="1"/><path d="M12 518.5 H16" stroke="#8a8a86" stroke-width="1"/><path d="M14 521.5 H16" stroke="#8a8a86" stroke-width="1"/><path d="M14 524.5 H16" stroke="#8a8a86" stroke-width="1"/><path d="M14 527.5 H16" stroke="#8a8a86" stroke-width="1"/><path d="M14 530.5 H16" stroke="#8a8a86" stroke-width="1"/><path d="M1 533.5 H16" stroke="#8a8a86" stroke-width="1"/><text x="4" y="542.5" font-size="8.5" fill="#6c6c68" font-family="Liberation Sans">1</text><text x="4" y="550.5" font-size="8.5" fill="#6c6c68" font-family="Liberation Sans">8</text><text x="4" y="558.5" font-size="8.5" fill="#6c6c68" font-family="Liberation Sans">0</text><path d="M14 536.5 H16" stroke="#8a8a86" stroke-width="1"/><path d="M14 539.5 H16" stroke="#8a8a86" stroke-width="1"/><path d="M14 541.5 H16" stroke="#8a8a86" stroke-width="1"/><path d="M14 544.5 H16" stroke="#8a8a86" stroke-width="1"/><path d="M12 547.5 H16" stroke="#8a8a86" stroke-width="1"/><path d="M14 550.5 H16" stroke="#8a8a86" stroke-width="1"/><path d="M14 553.5 H16" stroke="#8a8a86" stroke-width="1"/><path d="M14 556.5 H16" stroke="#8a8a86" stroke-width="1"/><path d="M14 559.5 H16" stroke="#8a8a86" stroke-width="1"/><path d="M1 562.5 H16" stroke="#8a8a86" stroke-width="1"/><text x="4" y="571.5" font-size="8.5" fill="#6c6c68" font-family="Liberation Sans">1</text><text x="4" y="579.5" font-size="8.5" fill="#6c6c68" font-family="Liberation Sans">9</text><text x="4" y="587.5" font-size="8.5" fill="#6c6c68" font-family="Liberation Sans">0</text><path d="M14 565.5 H16" stroke="#8a8a86" stroke-width="1"/><path d="M14 568.5 H16" stroke="#8a8a86" stroke-width="1"/><path d="M14 571.5 H16" stroke="#8a8a86" stroke-width="1"/><path d="M14 574.5 H16" stroke="#8a8a86" stroke-width="1"/><path d="M12 577.5 H16" stroke="#8a8a86" stroke-width="1"/><path d="M14 579.5 H16" stroke="#8a8a86" stroke-width="1"/><path d="M14 582.5 H16" stroke="#8a8a86" stroke-width="1"/><path d="M14 585.5 H16" stroke="#8a8a86" stroke-width="1"/><path d="M14 588.5 H16" stroke="#8a8a86" stroke-width="1"/><path d="M1 591.5 H16" stroke="#8a8a86" stroke-width="1"/><text x="4" y="600.5" font-size="8.5" fill="#6c6c68" font-family="Liberation Sans">2</text><text x="4" y="608.5" font-size="8.5" fill="#6c6c68" font-family="Liberation Sans">0</text><text x="4" y="616.5" font-size="8.5" fill="#6c6c68" font-family="Liberation Sans">0</text><path d="M14 594.5 H16" stroke="#8a8a86" stroke-width="1"/><path d="M14 597.5 H16" stroke="#8a8a86" stroke-width="1"/><path d="M14 600.5 H16" stroke="#8a8a86" stroke-width="1"/><path d="M14 603.5 H16" stroke="#8a8a86" stroke-width="1"/><path d="M12 606.5 H16" stroke="#8a8a86" stroke-width="1"/><path d="M14 609.5 H16" stroke="#8a8a86" stroke-width="1"/><path d="M14 612.5 H16" stroke="#8a8a86" stroke-width="1"/><path d="M14 614.5 H16" stroke="#8a8a86" stroke-width="1"/><path d="M14 617.5 H16" stroke="#8a8a86" stroke-width="1"/><path d="M1 620.5 H16" stroke="#8a8a86" stroke-width="1"/><text x="4" y="629.5" font-size="8.5" fill="#6c6c68" font-family="Liberation Sans">2</text><text x="4" y="637.5" font-size="8.5" fill="#6c6c68" font-family="Liberation Sans">1</text><text x="4" y="645.5" font-size="8.5" fill="#6c6c68" font-family="Liberation Sans">0</text><path d="M14 623.5 H16" stroke="#8a8a86" stroke-width="1"/><path d="M14 626.5 H16" stroke="#8a8a86" stroke-width="1"/><path d="M14 629.5 H16" stroke="#8a8a86" stroke-width="1"/><path d="M14 632.5 H16" stroke="#8a8a86" stroke-width="1"/><path d="M12 635.5 H16" stroke="#8a8a86" stroke-width="1"/><path d="M14 638.5 H16" stroke="#8a8a86" stroke-width="1"/><path d="M14 641.5 H16" stroke="#8a8a86" stroke-width="1"/><path d="M14 644.5 H16" stroke="#8a8a86" stroke-width="1"/><path d="M14 647.5 H16" stroke="#8a8a86" stroke-width="1"/><path d="M1 649.5 H16" stroke="#8a8a86" stroke-width="1"/><text x="4" y="658.5" font-size="8.5" fill="#6c6c68" font-family="Liberation Sans">2</text><text x="4" y="666.5" font-size="8.5" fill="#6c6c68" font-family="Liberation Sans">2</text><text x="4" y="674.5" font-size="8.5" fill="#6c6c68" font-family="Liberation Sans">0</text><path d="M14 652.5 H16" stroke="#8a8a86" stroke-width="1"/><path d="M14 655.5 H16" stroke="#8a8a86" stroke-width="1"/><path d="M14 658.5 H16" stroke="#8a8a86" stroke-width="1"/><path d="M14 661.5 H16" stroke="#8a8a86" stroke-width="1"/><path d="M12 664.5 H16" stroke="#8a8a86" stroke-width="1"/><path d="M14 667.5 H16" stroke="#8a8a86" stroke-width="1"/><path d="M14 670.5 H16" stroke="#8a8a86" stroke-width="1"/><path d="M14 673.5 H16" stroke="#8a8a86" stroke-width="1"/><path d="M14 676.5 H16" stroke="#8a8a86" stroke-width="1"/><path d="M1 679.5 H16" stroke="#8a8a86" stroke-width="1"/><text x="4" y="688.5" font-size="8.5" fill="#6c6c68" font-family="Liberation Sans">2</text><text x="4" y="696.5" font-size="8.5" fill="#6c6c68" font-family="Liberation Sans">3</text><text x="4" y="704.5" font-size="8.5" fill="#6c6c68" font-family="Liberation Sans">0</text><path d="M14 682.5 H16" stroke="#8a8a86" stroke-width="1"/><path d="M14 684.5 H16" stroke="#8a8a86" stroke-width="1"/><path d="M14 687.5 H16" stroke="#8a8a86" stroke-width="1"/><path d="M14 690.5 H16" stroke="#8a8a86" stroke-width="1"/><path d="M12 693.5 H16" stroke="#8a8a86" stroke-width="1"/><path d="M14 696.5 H16" stroke="#8a8a86" stroke-width="1"/><path d="M14 699.5 H16" stroke="#8a8a86" stroke-width="1"/><path d="M14 702.5 H16" stroke="#8a8a86" stroke-width="1"/><path d="M14 705.5 H16" stroke="#8a8a86" stroke-width="1"/><path d="M1 708.5 H16" stroke="#8a8a86" stroke-width="1"/><text x="4" y="717.5" font-size="8.5" fill="#6c6c68" font-family="Liberation Sans">2</text><text x="4" y="725.5" font-size="8.5" fill="#6c6c68" font-family="Liberation Sans">4</text><text x="4" y="733.5" font-size="8.5" fill="#6c6c68" font-family="Liberation Sans">0</text><path d="M14 711.5 H16" stroke="#8a8a86" stroke-width="1"/><path d="M14 714.5 H16" stroke="#8a8a86" stroke-width="1"/><path d="M14 717.5 H16" stroke="#8a8a86" stroke-width="1"/><path d="M14 719.5 H16" stroke="#8a8a86" stroke-width="1"/><path d="M12 722.5 H16" stroke="#8a8a86" stroke-width="1"/><path d="M14 725.5 H16" stroke="#8a8a86" stroke-width="1"/><path d="M14 728.5 H16" stroke="#8a8a86" stroke-width="1"/><path d="M14 731.5 H16" stroke="#8a8a86" stroke-width="1"/><path d="M14 734.5 H16" stroke="#8a8a86" stroke-width="1"/><path d="M1 737.5 H16" stroke="#8a8a86" stroke-width="1"/><text x="4" y="746.5" font-size="8.5" fill="#6c6c68" font-family="Liberation Sans">2</text><text x="4" y="754.5" font-size="8.5" fill="#6c6c68" font-family="Liberation Sans">5</text><text x="4" y="762.5" font-size="8.5" fill="#6c6c68" font-family="Liberation Sans">0</text><path d="M14 740.5 H16" stroke="#8a8a86" stroke-width="1"/><path d="M14 743.5 H16" stroke="#8a8a86" stroke-width="1"/><path d="M14 746.5 H16" stroke="#8a8a86" stroke-width="1"/><path d="M14 749.5 H16" stroke="#8a8a86" stroke-width="1"/><path d="M12 752.5 H16" stroke="#8a8a86" stroke-width="1"/><path d="M14 755.5 H16" stroke="#8a8a86" stroke-width="1"/><path d="M14 757.5 H16" stroke="#8a8a86" stroke-width="1"/><path d="M14 760.5 H16" stroke="#8a8a86" stroke-width="1"/><path d="M14 763.5 H16" stroke="#8a8a86" stroke-width="1"/><path d="M1 766.5 H16" stroke="#8a8a86" stroke-width="1"/><text x="4" y="775.5" font-size="8.5" fill="#6c6c68" font-family="Liberation Sans">2</text><text x="4" y="783.5" font-size="8.5" fill="#6c6c68" font-family="Liberation Sans">6</text><text x="4" y="791.5" font-size="8.5" fill="#6c6c68" font-family="Liberation Sans">0</text><path d="M14 769.5 H16" stroke="#8a8a86" stroke-width="1"/><path d="M14 772.5 H16" stroke="#8a8a86" stroke-width="1"/><path d="M14 775.5 H16" stroke="#8a8a86" stroke-width="1"/><path d="M14 778.5 H16" stroke="#8a8a86" stroke-width="1"/><path d="M12 781.5 H16" stroke="#8a8a86" stroke-width="1"/><path d="M14 784.5 H16" stroke="#8a8a86" stroke-width="1"/><path d="M14 787.5 H16" stroke="#8a8a86" stroke-width="1"/><path d="M14 790.5 H16" stroke="#8a8a86" stroke-width="1"/><path d="M14 792.5 H16" stroke="#8a8a86" stroke-width="1"/><path d="M1 795.5 H16" stroke="#8a8a86" stroke-width="1"/><text x="4" y="804.5" font-size="8.5" fill="#6c6c68" font-family="Liberation Sans">2</text><text x="4" y="812.5" font-size="8.5" fill="#6c6c68" font-family="Liberation Sans">7</text><text x="4" y="820.5" font-size="8.5" fill="#6c6c68" font-family="Liberation Sans">0</text><path d="M14 798.5 H16" stroke="#8a8a86" stroke-width="1"/><path d="M14 801.5 H16" stroke="#8a8a86" stroke-width="1"/><path d="M14 804.5 H16" stroke="#8a8a86" stroke-width="1"/><path d="M14 807.5 H16" stroke="#8a8a86" stroke-width="1"/><path d="M12 810.5 H16" stroke="#8a8a86" stroke-width="1"/><path d="M14 813.5 H16" stroke="#8a8a86" stroke-width="1"/><path d="M14 816.5 H16" stroke="#8a8a86" stroke-width="1"/><path d="M14 819.5 H16" stroke="#8a8a86" stroke-width="1"/><path d="M14 822.5 H16" stroke="#8a8a86" stroke-width="1"/><path d="M1 825.5 H16" stroke="#8a8a86" stroke-width="1"/><text x="4" y="834.5" font-size="8.5" fill="#6c6c68" font-family="Liberation Sans">2</text><text x="4" y="842.5" font-size="8.5" fill="#6c6c68" font-family="Liberation Sans">8</text><text x="4" y="850.5" font-size="8.5" fill="#6c6c68" font-family="Liberation Sans">0</text><path d="M14 827.5 H16" stroke="#8a8a86" stroke-width="1"/><path d="M14 830.5 H16" stroke="#8a8a86" stroke-width="1"/><path d="M14 833.5 H16" stroke="#8a8a86" stroke-width="1"/><path d="M14 836.5 H16" stroke="#8a8a86" stroke-width="1"/><path d="M12 839.5 H16" stroke="#8a8a86" stroke-width="1"/><path d="M14 842.5 H16" stroke="#8a8a86" stroke-width="1"/><path d="M14 845.5 H16" stroke="#8a8a86" stroke-width="1"/><path d="M14 848.5 H16" stroke="#8a8a86" stroke-width="1"/><path d="M14 851.5 H16" stroke="#8a8a86" stroke-width="1"/><path d="M1 854.5 H16" stroke="#8a8a86" stroke-width="1"/><text x="4" y="863.5" font-size="8.5" fill="#6c6c68" font-family="Liberation Sans">2</text><text x="4" y="871.5" font-size="8.5" fill="#6c6c68" font-family="Liberation Sans">9</text><text x="4" y="879.5" font-size="8.5" fill="#6c6c68" font-family="Liberation Sans">0</text><path d="M14 857.5 H16" stroke="#8a8a86" stroke-width="1"/><path d="M14 860.5 H16" stroke="#8a8a86" stroke-width="1"/><path d="M14 862.5 H16" stroke="#8a8a86" stroke-width="1"/><path d="M14 865.5 H16" stroke="#8a8a86" stroke-width="1"/><path d="M12 868.5 H16" stroke="#8a8a86" stroke-width="1"/><path d="M14 871.5 H16" stroke="#8a8a86" stroke-width="1"/><path d="M14 874.5 H16" stroke="#8a8a86" stroke-width="1"/><path d="M14 877.5 H16" stroke="#8a8a86" stroke-width="1"/><path d="M14 880.5 H16" stroke="#8a8a86" stroke-width="1"/><path d="M1 883.5 H16" stroke="#8a8a86" stroke-width="1"/><text x="4" y="892.5" font-size="8.5" fill="#6c6c68" font-family="Liberation Sans">3</text><text x="4" y="900.5" font-size="8.5" fill="#6c6c68" font-family="Liberation Sans">0</text><text x="4" y="908.5" font-size="8.5" fill="#6c6c68" font-family="Liberation Sans">0</text></svg><div style="left:73px;top:125px;width:16px;height:16px;background:#2c2c2c"></div><div style="left:75px;top:127px;width:12px;height:12px;background:repeating-linear-gradient(90deg,#777 0 1px,transparent 1px 3px);opacity:.35"></div><svg style="left:546px;top:199px;" width="9" height="7" viewBox="0 0 9 7"><path d="M4 0.5 L1 3.5 L4 6.5 M8 0.5 L5 3.5 L8 6.5" stroke="#d8d8d8" stroke-width="1.2" fill="none"/></svg><svg style="left:566px;top:199px;" width="7" height="7" viewBox="0 0 7 7"><path d="M0.5 0.5 L6.5 6.5 M6.5 0.5 L0.5 6.5" stroke="#dedede" stroke-width="1.8"/></svg><div style="left:177px;top:324px;width:400px;height:1px;background:#3e3e3e"></div><div class="t" style="left:182px;top:332.54px;font-size:10px;line-height:10px;color:#e4e4e4;font-weight:normal;">Alerts</div><div style="left:183px;top:348px;width:388px;height:86px;background:#fdfdfd;border-radius:2px"></div><div style="left:552px;top:349px;width:18px;height:84px;background:#f0f0f0"></div><svg style="left:555px;top:352px;" width="11" height="7" viewBox="0 0 11 7"><path d="M1 6 L5.5 1.5 L10 6" stroke="#a8a8a8" stroke-width="1.2" fill="none"/></svg><svg style="left:555px;top:422px;" width="11" height="7" viewBox="0 0 11 7"><path d="M1 1 L5.5 5.5 L10 1" stroke="#a8a8a8" stroke-width="1.2" fill="none"/></svg><div style="left:449px;top:439px;width:114px;height:25px;background:#5b5b5b;border-radius:3px"></div><div class="t" style="left:479px;top:446.54px;font-size:10px;line-height:10px;color:#7a7a7a;font-weight:normal;">Clear Alerts</div><div style="left:177px;top:466px;width:400px;height:1px;background:#3a3a3a"></div><div style="left:177px;top:467px;width:400px;height:29px;background:#404040"></div><div style="left:261px;top:470px;width:1px;height:25px;background:#3a3a3a"></div><div style="left:349px;top:467px;width:64px;height:29px;background:#535353"></div><div class="t" style="left:189px;top:477.27px;font-size:11.5px;line-height:11.5px;color:#a8a8a8;font-weight:normal;">Script Label</div><div class="t" style="left:274px;top:477.27px;font-size:11.5px;line-height:11.5px;color:#a8a8a8;font-weight:normal;">Data Merge</div><svg style="left:355px;top:477px;" width="6" height="11" viewBox="0 0 6 11"><path d="M0.8 4 L3 1 L5.2 4 M0.8 7 L3 10 L5.2 7" stroke="#c8c8c8" stroke-width="1.1" fill="none"/></svg><div class="t" style="left:366px;top:477.69px;font-size:11px;line-height:11px;color:#f2f2f2;font-weight:bold;letter-spacing:-0.3px">Scripts</div><svg style="left:561px;top:479px;" width="10" height="8" viewBox="0 0 10 8"><path d="M0 0.5 H10 M0 2.5 H10 M0 4.5 H10 M0 6.5 H10" stroke="#c8c8c8" stroke-width="1"/></svg><svg style="left:188px;top:503px;" width="6" height="10" viewBox="0 0 6 10"><path d="M1 1 L5 5 L1 9" stroke="#a8a8a8" stroke-width="1.1" fill="none"/></svg><svg style="left:202px;top:502px;" width="15" height="12" viewBox="0 0 15 12"><path d="M0 1 H5 L6.5 2.5 H15 V12 H0 Z" fill="#c8c8c8"/><path d="M0 4 H15" stroke="#9a9a9a" stroke-width="0.8"/></svg><div class="t" style="left:222px;top:503.54px;font-size:10px;line-height:10px;color:#e8e8e8;font-weight:normal;">Application</div><svg style="left:188px;top:525px;" width="6" height="10" viewBox="0 0 6 10"><path d="M1 1 L5 5 L1 9" stroke="#a8a8a8" stroke-width="1.1" fill="none"/></svg><svg style="left:202px;top:524px;" width="15" height="12" viewBox="0 0 15 12"><path d="M0 1 H5 L6.5 2.5 H15 V12 H0 Z" fill="#c8c8c8"/><path d="M0 4 H15" stroke="#9a9a9a" stroke-width="0.8"/></svg><div class="t" style="left:222px;top:525.53px;font-size:10px;line-height:10px;color:#e8e8e8;font-weight:normal;">Community</div><svg style="left:186px;top:549px;" width="10" height="6" viewBox="0 0 10 6"><path d="M1 1 L5 5 L9 1" stroke="#a8a8a8" stroke-width="1.1" fill="none"/></svg><svg style="left:202px;top:546px;" width="15" height="12" viewBox="0 0 15 12"><path d="M0 1 H5 L6.5 2.5 H15 V12 H0 Z" fill="#c8c8c8"/><path d="M0 4 H15" stroke="#9a9a9a" stroke-width="0.8"/></svg><div class="t" style="left:222px;top:547.53px;font-size:10px;line-height:10px;color:#e8e8e8;font-weight:normal;">User</div><div style="left:177px;top:541px;width:400px;height:1px;background:#5e5e5e"></div><div style="left:177px;top:562px;width:400px;height:22px;background:#486e8d"></div><svg style="left:222px;top:567px;" width="15" height="13" viewBox="0 0 15 13"><circle cx="5" cy="4" r="3" fill="#d0d0d0"/><path d="M1 13 Q2 6 5 7 Q8 6 8 13 Z" fill="#d0d0d0"/><path d="M10 13 Q10 8 12 7 Q14 8 14 13 Z" fill="#c0c0c0"/></svg><div class="t" style="left:243px;top:569.37px;font-size:10.2px;line-height:10.2px;color:#f4f4f4;font-weight:normal;">indesign-advanced-macro-script.js</div><div style="left:177px;top:650px;width:400px;height:1px;background:#4e4e4e"></div><svg style="left:543px;top:657px;" width="12" height="12" viewBox="0 0 12 12"><circle cx="6" cy="6" r="5.5" fill="#d8d8d8"/><rect x="5" y="5" width="2" height="5" fill="#444"/><rect x="5" y="2.5" width="2" height="1.6" fill="#444"/></svg><div style="left:177px;top:675px;width:400px;height:1px;background:#3a3a3a"></div><div style="left:360px;top:678px;width:32px;height:2px;background:repeating-linear-gradient(90deg,#3a3a3a 0 1px,transparent 1px 2px)"></div><div style="left:1512px;top:108px;width:1px;height:525px;background:#383838"></div><div class="t" style="left:1525px;top:119.11px;font-size:10.5px;line-height:10.5px;color:#a8a8a8;font-weight:bold;">Pages</div><div class="t" style="left:1581px;top:119.11px;font-size:10.5px;line-height:10.5px;color:#a8a8a8;font-weight:bold;">Layers</div><div class="t" style="left:1639px;top:119.11px;font-size:10.5px;line-height:10.5px;color:#f2f2f2;font-weight:bold;">Links</div><svg style="left:1712px;top:119px;" width="10" height="8" viewBox="0 0 10 8"><path d="M1 1 L4 4 L1 7 M6 1 L9 4 L6 7" stroke="#dcdcdc" stroke-width="1.3" fill="none"/></svg><div style="left:1729px;top:117px;width:1px;height:13px;background:#8a8a8a"></div><svg style="left:1737px;top:120px;" width="11" height="7" viewBox="0 0 11 7"><path d="M0 0.5 H11 M0 3 H11 M0 5.5 H11" stroke="#c8c8c8" stroke-width="1"/></svg><div class="t" style="left:1518px;top:143.69px;font-size:11px;line-height:11px;color:#f0f0f0;font-weight:bold;">Name</div><div style="left:1667px;top:140px;width:1px;height:17px;background:#6a6a6a"></div><div style="left:1703px;top:140px;width:1px;height:17px;background:#6a6a6a"></div><div style="left:1739px;top:140px;width:1px;height:17px;background:#6a6a6a"></div><svg style="left:1679px;top:142px;" width="14" height="12" viewBox="0 0 14 12"><path d="M7 1 L13 11.5 H1 Z" fill="none" stroke="#b8b8b8" stroke-width="1.2"/><path d="M7 5 V9" stroke="#b8b8b8" stroke-width="1.2"/></svg><svg style="left:1716px;top:142px;" width="12" height="13" viewBox="0 0 12 13"><path d="M0.5 0.5 H7.5 L11.5 4.5 V12.5 H0.5 Z M7.5 0.5 V4.5 H11.5" fill="none" stroke="#c8c8c8" stroke-width="1.1"/></svg><svg style="left:1731px;top:145px;" width="7" height="4" viewBox="0 0 7 4"><path d="M0 4 L3.5 0 L7 4 Z" fill="#c8c8c8"/></svg><div style="left:1513px;top:379px;width:240px;height:1px;background:#484848"></div><svg style="left:1521px;top:392px;" width="9" height="6" viewBox="0 0 9 6"><path d="M1 1 L4.5 4.5 L8 1" stroke="#a8a8a8" stroke-width="1.1" fill="none"/></svg><div class="t" style="left:1537px;top:390.54px;font-size:10px;line-height:10px;color:#e0e0e0;font-weight:normal;">0 Links</div><svg style="left:1602px;top:387px;" width="19" height="14" viewBox="0 0 19 14"><rect x="8.5" y="0.5" width="10" height="10" fill="none" stroke="#7a7a7a"/><path d="M1 12 Q1 8 5 8 M3 13 Q7 13 7 9" stroke="#7a7a7a" stroke-width="1.3" fill="none"/></svg><svg style="left:1633px;top:388px;" width="15" height="11" viewBox="0 0 15 11"><path d="M5 2 H3 Q0.5 2 0.5 5.5 Q0.5 9 3 9 H6 Q8.5 9 8.5 5.5 M10 9 H12 Q14.5 9 14.5 5.5 Q14.5 2 12 2 H9 Q6.5 2 6.5 5.5" stroke="#7a7a7a" stroke-width="1.3" fill="none"/></svg><svg style="left:1662px;top:386px;" width="16" height="14" viewBox="0 0 16 14"><path d="M6 1 H11 L15 5 V13 H6 Z" fill="none" stroke="#7a7a7a"/><path d="M0 8 H9 M6 5 L9 8 L6 11" stroke="#7a7a7a" stroke-width="1.4" fill="none"/></svg><svg style="left:1689px;top:386px;" width="14" height="14" viewBox="0 0 14 14"><path d="M12 5 A5.5 5.5 0 0 0 2 5 M2 9 A5.5 5.5 0 0 0 12 9 M12 1 V5 H8 M2 13 V9 H6" stroke="#7a7a7a" stroke-width="1.3" fill="none"/></svg><svg style="left:1717px;top:387px;" width="13" height="13" viewBox="0 0 13 13"><path d="M1 12 L2 9 L9 2 L11 4 L4 11 Z" fill="#7a7a7a"/></svg><div style="left:1513px;top:411px;width:240px;height:1px;background:#484848"></div><div class="t" style="left:1518px;top:419.69px;font-size:11px;line-height:11px;color:#f0f0f0;font-weight:bold;">Link Info</div><svg style="left:1709px;top:420px;" width="5" height="8" viewBox="0 0 5 8"><path d="M5 0 L0 4 L5 8 Z" fill="#777"/></svg><svg style="left:1734px;top:420px;" width="5" height="8" viewBox="0 0 5 8"><path d="M0 0 L5 4 L0 8 Z" fill="#777"/></svg><div style="left:1513px;top:437px;width:240px;height:1px;background:#484848"></div><div style="left:1513px;top:625px;width:240px;height:1px;background:#3a3a3a"></div><div style="left:1513px;top:632px;width:240px;height:1px;background:#3a3a3a"></div><div style="left:1617px;top:628px;width:19px;height:2px;background:repeating-linear-gradient(90deg,#3a3a3a 0 1px,transparent 1px 2px)"></div><svg style="left:1905px;top:100px;" width="9" height="7" viewBox="0 0 9 7"><path d="M4 0.5 L1 3.5 L4 6.5 M8 0.5 L5 3.5 L8 6.5" stroke="#d8d8d8" stroke-width="1.2" fill="none"/></svg><div style="left:1827px;top:113px;width:19px;height:2px;background:repeating-linear-gradient(90deg,#333 0 1px,transparent 1px 2px)"></div><div style="left:1760px;top:177px;width:154px;height:21px;background:#2f2f2f;border-radius:3px"></div><div class="t" style="left:1792px;top:127.61px;font-size:10.5px;line-height:10.5px;color:#ececec;font-weight:bold;">Pages</div><div class="t" style="left:1792px;top:155.81px;font-size:10.5px;line-height:10.5px;color:#ececec;font-weight:bold;">Layers</div><div class="t" style="left:1792px;top:183.91px;font-size:10.5px;line-height:10.5px;color:#ececec;font-weight:bold;">Links</div><div class="t" style="left:1792px;top:224.61px;font-size:10.5px;line-height:10.5px;color:#ececec;font-weight:bold;">Stroke</div><div class="t" style="left:1792px;top:252.71px;font-size:10.5px;line-height:10.5px;color:#ececec;font-weight:bold;">Swatches</div><div class="t" style="left:1792px;top:280.71px;font-size:10.5px;line-height:10.5px;color:#ececec;font-weight:bold;">Gradient</div><div class="t" style="left:1792px;top:308.81px;font-size:10.5px;line-height:10.5px;color:#ececec;font-weight:bold;">CC Libraries</div><div class="t" style="left:1792px;top:350.11px;font-size:10.5px;line-height:10.5px;color:#ececec;font-weight:bold;">Effects</div><div class="t" style="left:1792px;top:378.11px;font-size:10.5px;line-height:10.5px;color:#ececec;font-weight:bold;">Object Styles</div><div class="t" style="left:1792px;top:419.11px;font-size:10.5px;line-height:10.5px;color:#ececec;font-weight:bold;">Paragraph Styles</div><div class="t" style="left:1792px;top:460.11px;font-size:10.5px;line-height:10.5px;color:#ececec;font-weight:bold;">Character Styles</div><svg style="left:1766px;top:123px;" width="17" height="19" viewBox="0 0 17 19"><path d="M1 6 L7 2 V16 H1 Z M16 6 L10 2 V16 H16 Z" fill="#c8c8c8"/><path d="M8.5 0 V19" stroke="#c8c8c8" stroke-width="1"/></svg><svg style="left:1766px;top:152px;" width="17" height="17" viewBox="0 0 17 17"><path d="M8.5 1 L16 5.5 L8.5 10 L1 5.5 Z" fill="#c8c8c8"/><path d="M2 9 L8.5 13 L15 9 M2 12 L8.5 16 L15 12" stroke="#c8c8c8" stroke-width="1.5" fill="none"/></svg><svg style="left:1765px;top:183px;" width="19" height="10" viewBox="0 0 19 10"><path d="M7 1.5 H4.5 Q1 1.5 1 5 Q1 8.5 4.5 8.5 H8.5 Q12 8.5 12 5 M12 8.5 H14.5 Q18 8.5 18 5 Q18 1.5 14.5 1.5 H10.5 Q7 1.5 7 5" stroke="#c8c8c8" stroke-width="1.6" fill="none"/></svg><div style="left:1755px;top:204px;width:165px;height:1px;background:#3a3a3a"></div><div style="left:1827px;top:210px;width:19px;height:2px;background:repeating-linear-gradient(90deg,#333 0 1px,transparent 1px 2px)"></div><svg style="left:1766px;top:222px;" width="17" height="14" viewBox="0 0 17 14"><path d="M0 1.5 H17" stroke="#c8c8c8" stroke-width="1"/><path d="M0 6 H17" stroke="#c8c8c8" stroke-width="2"/><path d="M0 11.5 H17" stroke="#c8c8c8" stroke-width="2.6"/></svg><svg style="left:1766px;top:252px;" width="16" height="12" viewBox="0 0 16 12"><rect x="0.5" y="0.5" width="15" height="11" fill="none" stroke="#c8c8c8"/><rect x="1.5" y="1.5" width="4" height="4" fill="#999"/><rect x="6" y="1.5" width="4" height="4" fill="#bbb"/><rect x="10.5" y="1.5" width="4" height="4" fill="#888"/><rect x="1.5" y="6.5" width="4" height="4" fill="#aaa"/><rect x="6" y="6.5" width="4" height="4" fill="#888"/><rect x="10.5" y="6.5" width="4" height="4" fill="#bbb"/><path d="M5.5 1 V11 M10 1 V11 M1 6 H15" stroke="#c8c8c8" stroke-width="0.8"/></svg><div style="left:1766px;top:279px;width:17px;height:14px;border:1px solid #c8c8c8;box-sizing:border-box;background:linear-gradient(90deg,#1a1a1a,#e8e8e8)"></div><svg style="left:1766px;top:305px;" width="17" height="17" viewBox="0 0 17 17"><rect x="0.5" y="0.5" width="14" height="14" fill="none" stroke="#c8c8c8" stroke-width="1.1"/><rect x="3" y="3" width="13" height="13" fill="#535353" stroke="#c8c8c8" stroke-width="1.1"/><path d="M11 3 V9 L12.5 8 L14 9 V3" fill="#c8c8c8"/></svg><div style="left:1755px;top:331px;width:165px;height:1px;background:#3a3a3a"></div><div style="left:1827px;top:336px;width:19px;height:2px;background:repeating-linear-gradient(90deg,#333 0 1px,transparent 1px 2px)"></div><div class="t" style="left:1767px;top:346.46px;font-size:16px;line-height:16px;color:#b8b8b8;font-weight:normal;font-family:Liberation Serif,serif"><i>fx</i></div><svg style="left:1765px;top:374px;" width="19" height="17" viewBox="0 0 19 17"><rect x="5.5" y="0.5" width="12" height="12" fill="none" stroke="#c8c8c8" stroke-width="1.1" stroke-dasharray="6 1"/><rect x="1.5" y="8.5" width="7" height="7" fill="#535353" stroke="#c8c8c8" stroke-width="1.1"/><rect x="3.5" y="10.5" width="7" height="6" fill="none" stroke="#c8c8c8" stroke-width="1"/></svg><div style="left:1755px;top:398px;width:165px;height:1px;background:#3a3a3a"></div><div style="left:1827px;top:404px;width:19px;height:2px;background:repeating-linear-gradient(90deg,#333 0 1px,transparent 1px 2px)"></div><svg style="left:1765px;top:415px;" width="19" height="18" viewBox="0 0 19 18"><rect x="1.5" y="9.5" width="7" height="7" fill="#535353" stroke="#c8c8c8" stroke-width="1.1"/><rect x="3.5" y="11.5" width="7" height="6" fill="none" stroke="#c8c8c8"/><path d="M12 1 H18 M13.5 1 V14 M16 1 V14" stroke="#c8c8c8" stroke-width="1.2"/><circle cx="12" cy="4.5" r="3.2" fill="#c8c8c8"/></svg><div style="left:1755px;top:440px;width:165px;height:1px;background:#3a3a3a"></div><div style="left:1827px;top:445px;width:19px;height:2px;background:repeating-linear-gradient(90deg,#333 0 1px,transparent 1px 2px)"></div><svg style="left:1765px;top:455px;" width="19" height="19" viewBox="0 0 19 19"><rect x="1.5" y="10.5" width="7" height="7" fill="#535353" stroke="#c8c8c8" stroke-width="1.1"/><rect x="3.5" y="12.5" width="7" height="6" fill="none" stroke="#c8c8c8"/><path d="M9 12 L13 1 L17.5 12 M10.5 8 H15.5" stroke="#c8c8c8" stroke-width="1.3" fill="none"/></svg><div style="left:1755px;top:481px;width:165px;height:1px;background:#3a3a3a"></div><div class="t" style="left:88px;top:1026.96px;font-size:9.5px;line-height:9.5px;color:#a8a8a8;font-weight:normal;">77.25%</div><svg style="left:130px;top:1029px;" width="10" height="6" viewBox="0 0 10 6"><path d="M1 1 L5 5 L9 1" stroke="#a0a0a0" stroke-width="1.1" fill="none"/></svg><svg style="left:150px;top:1027px;" width="9" height="9" viewBox="0 0 9 9"><path d="M1 0 V9" stroke="#888" stroke-width="1.4"/><path d="M8 0.5 L3 4.5 L8 8.5 Z" fill="#888"/></svg><svg style="left:173px;top:1027px;" width="6" height="9" viewBox="0 0 6 9"><path d="M6 0.5 L1 4.5 L6 8.5 Z" fill="#888"/></svg><div style="left:189px;top:1023px;width:94px;height:16px;background:#5b5b5b"></div><div class="t" style="left:194px;top:1026.54px;font-size:10px;line-height:10px;color:#b0b0b0;font-weight:normal;">1</div><svg style="left:266px;top:1029px;" width="10" height="6" viewBox="0 0 10 6"><path d="M1 1 L5 5 L9 1" stroke="#a0a0a0" stroke-width="1.1" fill="none"/></svg><svg style="left:292px;top:1027px;" width="6" height="9" viewBox="0 0 6 9"><path d="M0 0.5 L5 4.5 L0 8.5 Z" fill="#777"/></svg><svg style="left:312px;top:1027px;" width="9" height="9" viewBox="0 0 9 9"><path d="M8 0 V9" stroke="#777" stroke-width="1.4"/><path d="M1 0.5 L6 4.5 L1 8.5 Z" fill="#777"/></svg><svg style="left:338px;top:1025px;" width="16" height="13" viewBox="0 0 16 13"><path d="M2 11 V6 Q2 1 7 1 Q12 1 12 6 V11" stroke="#8a8a8a" stroke-width="2.2" fill="none"/><path d="M13 11 L16 11 L16 13 Z" fill="#888"/></svg><div class="t" style="left:371px;top:1026.54px;font-size:10px;line-height:10px;color:#a8a8a8;font-weight:normal;">[Basic] (working)</div><svg style="left:471px;top:1029px;" width="10" height="6" viewBox="0 0 10 6"><path d="M1 1 L5 5 L9 1" stroke="#a0a0a0" stroke-width="1.1" fill="none"/></svg><div style="left:496px;top:1026px;width:11px;height:11px;border-radius:50%;background:#2f8a2f"></div><div class="t" style="left:512px;top:1026.54px;font-size:10px;line-height:10px;color:#8c8c8c;font-weight:normal;">No errors</div><svg style="left:573px;top:1029px;" width="10" height="6" viewBox="0 0 10 6"><path d="M1 1 L5 5 L9 1" stroke="#888" stroke-width="1.1" fill="none"/></svg><svg style="left:1719px;top:1025px;" width="17" height="12" viewBox="0 0 17 12"><rect x="0.5" y="0.5" width="16" height="11" fill="none" stroke="#c0c0c0"/><path d="M8.5 0 V12" stroke="#c0c0c0" stroke-width="1.2"/></svg><svg style="left:1743px;top:1029px;" width="7" height="9" viewBox="0 0 7 9"><path d="M6 1 V9 M4 4 V9 M2 7 V9" stroke="#7a7a9a" stroke-width="1" stroke-dasharray="1 1"/></svg><div style="left:0;top:1039px;width:1920px;height:41px;background:linear-gradient(90deg,#1f3445 0px,#1f3445 760px,#1c2d3e 1090px,#1d2837 1530px)"></div><div style="left:4px;top:1039px;width:1px;height:41px;background:#5b6a78"></div><svg style="left:17px;top:1051px;" width="26" height="26" viewBox="0 0 26 26"><path d="M8 1 H25 V14 H21 L18 17 V14 H8 Z" fill="#f0f0f0"/><path d="M11 4.5 H22 M11 7.5 H22 M11 10.5 H19" stroke="#333" stroke-width="1.2"/><circle cx="9" cy="17" r="7.5" fill="#1f3445" stroke="#c8c8c8" stroke-width="1"/></svg><div class="t" style="left:22.5px;top:1062.27px;font-size:11.5px;line-height:11.5px;color:#f0f0f0;font-weight:normal;">2</div><div class="t" style="left:64px;top:1046.27px;font-size:11.5px;line-height:11.5px;color:#ffffff;font-weight:normal;">AM 32:5</div><div class="t" style="left:58px;top:1062.84px;font-size:12px;line-height:12px;color:#ffffff;font-weight:normal;">2/28/2025</div><div class="t" style="left:125px;top:1054.84px;font-size:12px;line-height:12px;color:#ffffff;font-weight:normal;direction:rtl">עבר</div><svg style="left:157px;top:1050px;" width="18" height="19" viewBox="0 0 18 19"><path d="M1 6.5 H4 L8.5 2 V17 L4 12.5 H1 Z" fill="none" stroke="#fff" stroke-width="1.2"/><path d="M11 6 Q13 9.5 11 13 M13.5 4 Q17 9.5 13.5 15" stroke="#fff" stroke-width="1.2" fill="none"/></svg><svg style="left:181px;top:1050px;" width="17" height="18" viewBox="0 0 17 18"><rect x="3.5" y="2.5" width="13" height="9" fill="none" stroke="#fff" stroke-width="1.2"/><path d="M10 11.5 V15 M5 15.5 H15" stroke="#fff" stroke-width="1.2"/><rect x="0.5" y="0.5" width="4" height="4" fill="#1f3445" stroke="#fff"/></svg><svg style="left:207px;top:1050px;" width="14" height="18" viewBox="0 0 14 18"><rect x="2.5" y="5.5" width="7" height="7" rx="1.5" fill="none" stroke="#fff" stroke-width="1.2"/><path d="M9.5 8 L13 6 V12 L9.5 10" stroke="#fff" fill="none"/><path d="M1 4 Q7 -1 13 4 M1 14 Q7 19 13 14" stroke="#ccc" fill="none"/></svg><svg style="left:231px;top:1055px;" width="13" height="8" viewBox="0 0 13 8"><path d="M1 7 L6.5 1.5 L12 7" stroke="#fff" stroke-width="1.3" fill="none"/></svg><svg style="left:268px;top:1046px;" width="27" height="26" viewBox="0 0 27 26"><path d="M10 2 Q14 6 13 11 Q11 15 1 11 Q7 12 9 8 Q10 5 10 2 Z" fill="#f5a832"/><path d="M4 24 Q0 24 0.5 19.5 Q1 16 5 16 Q6 10 12 10 Q18 10 19 15 Q25 15 26 19.5 Q26 24 21 24 Z" fill="#a6c6f2"/></svg><div class="t" style="left:301px;top:1053.57px;font-size:13.5px;line-height:13.5px;color:#ffffff;font-weight:normal;letter-spacing:-0.6px">7°C</div><div class="t" style="left:332px;top:1053.73px;font-size:14.5px;line-height:14.5px;color:#ffffff;font-weight:normal;direction:rtl">מעונן רב היום</div><svg style="left:860px;top:1048px;" width="24" height="24" viewBox="0 0 24 24"><circle cx="12" cy="12" r="11" fill="#000" stroke="#eaeaea" stroke-width="1.5"/><circle cx="12" cy="12" r="6.5" fill="#e52a2a"/></svg><div style="left:852px;top:1074px;width:40px;height:3px;background:#5a6470"></div><div style="left:898px;top:1045px;width:46px;height:35px;background:#3c4a57"></div><div style="left:909px;top:1049px;width:23px;height:22px;background:#470230;border-radius:3px"></div><div class="t" style="left:913px;top:1055.00px;font-size:13px;line-height:13px;color:#ff4d8a;font-weight:bold;">Id</div><svg style="left:957px;top:1048px;" width="24" height="24" viewBox="0 0 24 24"><circle cx="12" cy="12" r="11" fill="#e0b43a"/><path d="M12 1 A11 11 0 0 0 2 7 L12 12 Z" fill="#d93a2e"/><path d="M12 1 A11 11 0 0 1 22 7 L12 12 Z" fill="#d93a2e"/><path d="M2 7 A11 11 0 0 0 6 21 L12 12 Z" fill="#3aa655"/><circle cx="12" cy="12" r="4.5" fill="#fff"/><circle cx="12" cy="12" r="3.2" fill="#3b7de0"/><path d="M2 16 L8 22 M6 14 L13 22 M10 14 L18 22 M15 14 L22 20" stroke="#b08858" stroke-width="2.5"/></svg><svg style="left:1007px;top:1049px;" width="22" height="22" viewBox="0 0 22 22"><path d="M6 1 H18 L21 19 H2 Z" fill="#9fd4e8"/><path d="M6 1 H18 L21 19 H2 Z" fill="url(#np)"/><defs><linearGradient id="np" x1="0" y1="0" x2="1" y2="1"><stop offset="0" stop-color="#d8f0f8"/><stop offset="1" stop-color="#3c9ab8"/></linearGradient></defs></svg><svg style="left:1057px;top:1050px;" width="21" height="21" viewBox="0 0 21 21"><circle cx="10.5" cy="10.5" r="6.8" fill="none" stroke="#fff" stroke-width="3"/><path d="M10.5 0.5 V4 M10.5 17 V20.5 M0.5 10.5 H4 M17 10.5 H20.5 M3.4 3.4 L5.8 5.8 M15.2 15.2 L17.6 17.6 M3.4 17.6 L5.8 15.2 M15.2 5.8 L17.6 3.4" stroke="#fff" stroke-width="3.2"/></svg><svg style="left:1106px;top:1048px;" width="22" height="24" viewBox="0 0 22 24"><circle cx="12" cy="10" r="8" fill="none" stroke="#d9452b" stroke-width="2.6"/><path d="M9 1 L12 13 M15 1 L12 13" stroke="#ddd" stroke-width="2"/><circle cx="6" cy="19" r="2.8" fill="none" stroke="#2a8ae0" stroke-width="2"/><circle cx="11" cy="21" r="2.8" fill="none" stroke="#2aa8e0" stroke-width="2"/></svg><svg style="left:1154px;top:1049px;" width="24" height="22" viewBox="0 0 24 22"><circle cx="14" cy="8" r="7" fill="#4a8ad8"/><path d="M9 5 Q13 3 18 6 Q16 11 11 10 Z" fill="#8cc84a"/><path d="M2 12 Q6 7 14 10 L20 10 L14 18 L13 14 Q7 13 5 18 Q1 16 2 12 Z" fill="#3db34a"/><path d="M2 12 Q4 10 8 11" stroke="#e8a020" stroke-width="2" fill="none"/></svg><svg style="left:1203px;top:1048px;" width="24" height="24" viewBox="0 0 24 24"><circle cx="14" cy="9.5" r="6.5" fill="none" stroke="#f5821f" stroke-width="3.2"/><path d="M9.5 14.5 L3 21" stroke="#f5821f" stroke-width="3.6" stroke-linecap="round"/></svg><svg style="left:1252px;top:1048px;" width="24" height="24" viewBox="0 0 24 24"><circle cx="12" cy="12" r="11.5" fill="#fbc02d"/><path d="M12 12 L2.04 6.25 A11.5 11.5 0 0 1 21.96 6.25 Z" fill="#e53935"/><path d="M12 12 L12 23.5 A11.5 11.5 0 0 1 2.04 6.25 Z" fill="#43a047"/><circle cx="12" cy="12" r="5.3" fill="#fff"/><circle cx="12" cy="12" r="4.1" fill="#1e88e5"/></svg><svg style="left:1304px;top:1048px;" width="18" height="24" viewBox="0 0 18 24"><rect x="0.5" y="0.5" width="17" height="23" fill="#6f7d8c" stroke="#9aa"/><rect x="2.5" y="2.5" width="13" height="4" fill="#5ac8e8"/><g fill="#d8dde2"><rect x="2.5" y="9" width="3.5" height="3"/><rect x="7.2" y="9" width="3.5" height="3"/><rect x="12" y="9" width="3.5" height="3"/><rect x="2.5" y="14" width="3.5" height="3"/><rect x="7.2" y="14" width="3.5" height="3"/><rect x="2.5" y="19" width="3.5" height="3"/><rect x="7.2" y="19" width="3.5" height="3"/></g><rect x="12" y="14" width="3.5" height="8" fill="#2a5a9a"/></svg><svg style="left:1350px;top:1050px;" width="22" height="20" viewBox="0 0 22 20"><path d="M0 2 H8 L10 4 H22 V20 H0 Z" fill="#e8b030"/><path d="M0 6 H22 V20 H0 Z" fill="#ffd35a"/><path d="M6 20 V12 H16 V20 H13 V15 H9 V20 Z" fill="#3a8ad8"/></svg><svg style="left:1400px;top:1049px;" width="23" height="22" viewBox="0 0 23 22"><rect x="9" y="2" width="13" height="18" fill="#fff"/><path d="M11 5 H20 M11 8 H20 M11 11 H20 M11 14 H20 M11 17 H20" stroke="#2b5797" stroke-width="1"/><rect x="0" y="1" width="13" height="20" fill="#2b5797"/><text x="1.5" y="15" font-size="10" font-weight="bold" fill="#fff" font-family="Liberation Sans">W</text></svg><svg style="left:1448px;top:1048px;" width="23" height="24" viewBox="0 0 23 24"><path d="M7 6 V3 Q7 1 9 1 H14 Q16 1 16 3 V6" stroke="#3ab0e0" stroke-width="1.8" fill="none"/><rect x="0.5" y="5.5" width="22" height="18" rx="3" fill="#f5f5f5"/><rect x="7" y="10" width="4" height="4" fill="#f25022"/><rect x="12" y="10" width="4" height="4" fill="#7fba00"/><rect x="7" y="15" width="4" height="4" fill="#00a4ef"/><rect x="12" y="15" width="4" height="4" fill="#ffb900"/></svg><svg style="left:1497px;top:1049px;" width="24" height="22" viewBox="0 0 24 22"><defs><linearGradient id="cp" x1="0" y1="0" x2="1" y2="1"><stop offset="0" stop-color="#2bb3f0"/><stop offset="0.35" stop-color="#3dc46a"/><stop offset="0.55" stop-color="#f0a83a"/><stop offset="0.8" stop-color="#e050c0"/><stop offset="1" stop-color="#8050f0"/></linearGradient></defs><path d="M7 2 H15 Q18 2 17 6 L13 19 Q12 21 9 21 H4 Q1 21 2 17 L6 5 Q7 2 7 2 Z" fill="url(#cp)"/><path d="M10 2 H18 Q22 2 21 6 L17 19 Q16 21 13 21" fill="#c050e0" opacity="0.8"/></svg><svg style="left:1551px;top:1050px;" width="19" height="19" viewBox="0 0 19 19"><path d="M6 1.5 H18 M6 17.5 H18 M6 4 V15 M18 4 V15 M6 4 H18 M6 15 H18" stroke="#fff" stroke-width="1.3" fill="none"/><rect x="1" y="6" width="2.5" height="9" fill="#fff"/></svg><div style="left:852px;top:1077px;width:40px;height:3px;background:#86bfea"></div><div style="left:898px;top:1077px;width:46px;height:3px;background:#86bfea"></div><div style="left:950px;top:1077px;width:40px;height:3px;background:#86bfea"></div><div style="left:999px;top:1077px;width:41px;height:3px;background:#86bfea"></div><div style="left:1048px;top:1077px;width:40px;height:3px;background:#86bfea"></div><div style="left:1097px;top:1077px;width:40px;height:3px;background:#86bfea"></div><div style="left:1146px;top:1077px;width:41px;height:3px;background:#86bfea"></div><div style="left:1195px;top:1077px;width:40px;height:3px;background:#86bfea"></div><div style="left:1342px;top:1077px;width:40px;height:3px;background:#86bfea"></div><div style="left:1391px;top:1077px;width:40px;height:3px;background:#86bfea"></div><div style="left:1584px;top:1039px;width:288px;height:41px;background:#f7f7f7"></div><div class="t" style="left:1705px;top:1052.30px;font-size:15px;line-height:15px;color:#222;font-weight:normal;direction:rtl">הקלד כאן כדי לחפש</div><svg style="left:1843px;top:1052px;" width="18" height="17" viewBox="0 0 18 17"><circle cx="11" cy="6.5" r="5.5" fill="none" stroke="#222" stroke-width="1.3"/><path d="M7 10.5 L1 16.5" stroke="#222" stroke-width="1.4"/></svg><div style="left:1872px;top:1039px;width:48px;height:41px;background:#1a2550"></div><svg style="left:1888px;top:1051px;" width="17" height="17" viewBox="0 0 17 17"><path d="M0 2.5 L7 1.5 V8 H0 Z M8 1.3 L17 0 V8 H8 Z M0 9 H7 V15.5 L0 14.5 Z M8 9 H17 V17 L8 15.7 Z" fill="#fff"/></svg><svg style="left:6px;top:100px;" width="9" height="7" viewBox="0 0 9 7"><path d="M4 0.5 L1 3.5 L4 6.5 M8 0.5 L5 3.5 L8 6.5" stroke="#d0d0d0" stroke-width="1.2" fill="none"/></svg><div style="left:0px;top:109px;width:1px;height:931px;background:#3a3a3a"></div>
</body></html>
